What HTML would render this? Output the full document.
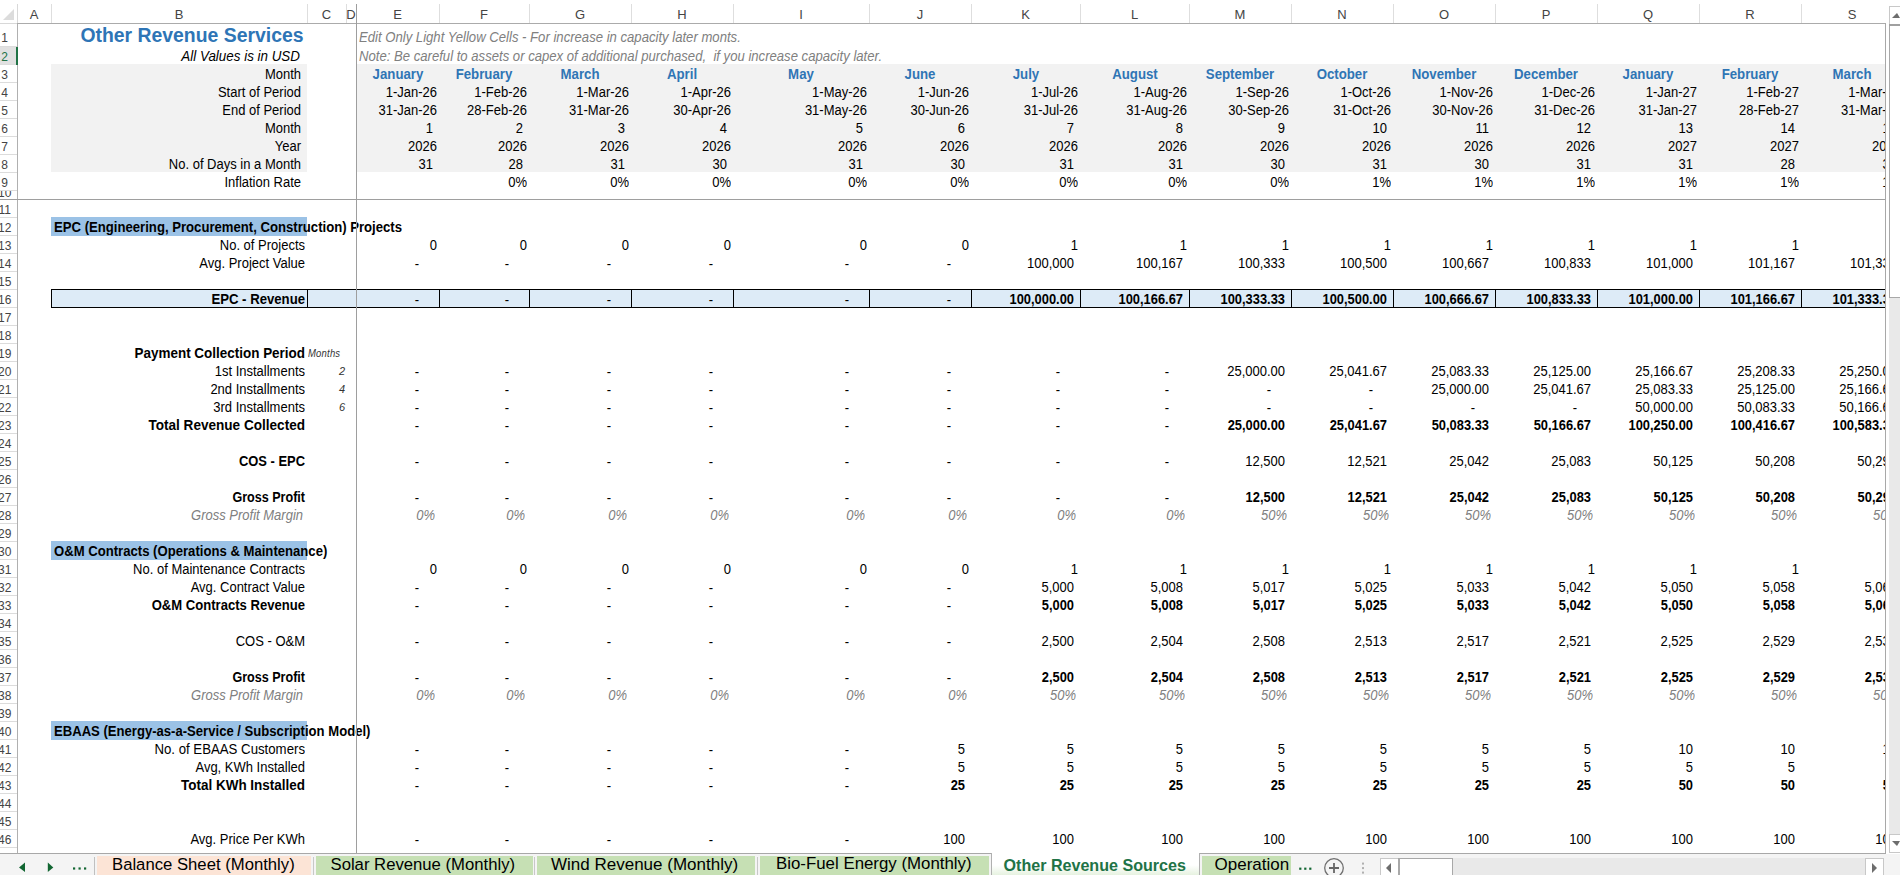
<!DOCTYPE html><html><head><meta charset="utf-8"><style>
html,body{margin:0;padding:0;width:1900px;height:875px;overflow:hidden;background:#fff;}
body{position:relative;font-family:"Liberation Sans",sans-serif;}
.t{position:absolute;white-space:pre;}
#rp{position:absolute;left:357px;top:0;width:1528px;height:853px;overflow:hidden;}
#lp{position:absolute;left:0;top:0;width:1900px;height:853px;}
</style></head><body>
<div id="rp">
<div style="position:absolute;left:-1px;top:64px;width:1547px;height:108px;background:#f2f2f2;"></div>
<div style="position:absolute;left:-1px;top:289px;width:1547px;height:19px;background:#ddebf7;"></div>
<div style="position:absolute;left:-1px;top:289px;width:1547px;height:1px;background:#000;"></div>
<div style="position:absolute;left:-1px;top:307px;width:1547px;height:1px;background:#000;"></div>
<div style="position:absolute;left:82px;top:289px;width:1px;height:19px;background:#000;"></div>
<div style="position:absolute;left:172px;top:289px;width:1px;height:19px;background:#000;"></div>
<div style="position:absolute;left:274px;top:289px;width:1px;height:19px;background:#000;"></div>
<div style="position:absolute;left:376px;top:289px;width:1px;height:19px;background:#000;"></div>
<div style="position:absolute;left:512px;top:289px;width:1px;height:19px;background:#000;"></div>
<div style="position:absolute;left:614px;top:289px;width:1px;height:19px;background:#000;"></div>
<div style="position:absolute;left:723px;top:289px;width:1px;height:19px;background:#000;"></div>
<div style="position:absolute;left:832px;top:289px;width:1px;height:19px;background:#000;"></div>
<div style="position:absolute;left:934px;top:289px;width:1px;height:19px;background:#000;"></div>
<div style="position:absolute;left:1036px;top:289px;width:1px;height:19px;background:#000;"></div>
<div style="position:absolute;left:1138px;top:289px;width:1px;height:19px;background:#000;"></div>
<div style="position:absolute;left:1240px;top:289px;width:1px;height:19px;background:#000;"></div>
<div style="position:absolute;left:1342px;top:289px;width:1px;height:19px;background:#000;"></div>
<div style="position:absolute;left:1444px;top:289px;width:1px;height:19px;background:#000;"></div>
<div style="position:absolute;left:1546px;top:289px;width:1px;height:19px;background:#000;"></div>
<div class="t" style="left:1.5px;top:30.25px;font:italic 14px/14px 'Liberation Sans', sans-serif;color:#808080;transform:scaleX(0.937);transform-origin:0 50%;">Edit Only Light Yellow Cells - For increase in capacity later monts.</div>
<div class="t" style="left:1.5px;top:49.25px;font:italic 14px/14px 'Liberation Sans', sans-serif;color:#808080;transform:scaleX(0.937);transform-origin:0 50%;">Note: Be careful to assets or capex of additional purchased,  if you increase capacity later.</div>
<div class="t" style="left:-559.5px;width:1200px;text-align:center;top:66.65px;font:bold 14px/14px 'Liberation Sans', sans-serif;color:#2f75b5;transform:scaleX(0.945);transform-origin:50% 50%;">January</div>
<div class="t" style="left:-1120.0px;width:1200px;text-align:right;top:84.65px;font:14px/14px 'Liberation Sans', sans-serif;color:#000;transform:scaleX(0.928);transform-origin:100% 50%;">1-Jan-26</div>
<div class="t" style="left:-1120.0px;width:1200px;text-align:right;top:102.65px;font:14px/14px 'Liberation Sans', sans-serif;color:#000;transform:scaleX(0.928);transform-origin:100% 50%;">31-Jan-26</div>
<div class="t" style="left:-1124.33px;width:1200px;text-align:right;top:120.65px;font:14px/14px 'Liberation Sans', sans-serif;color:#000;transform:scaleX(0.928);transform-origin:100% 50%;">1</div>
<div class="t" style="left:-1120.0px;width:1200px;text-align:right;top:138.65px;font:14px/14px 'Liberation Sans', sans-serif;color:#000;transform:scaleX(0.928);transform-origin:100% 50%;">2026</div>
<div class="t" style="left:-1124.33px;width:1200px;text-align:right;top:156.65px;font:14px/14px 'Liberation Sans', sans-serif;color:#000;transform:scaleX(0.928);transform-origin:100% 50%;">31</div>
<div class="t" style="left:-473.0px;width:1200px;text-align:center;top:66.65px;font:bold 14px/14px 'Liberation Sans', sans-serif;color:#2f75b5;transform:scaleX(0.945);transform-origin:50% 50%;">February</div>
<div class="t" style="left:-1030.0px;width:1200px;text-align:right;top:84.65px;font:14px/14px 'Liberation Sans', sans-serif;color:#000;transform:scaleX(0.928);transform-origin:100% 50%;">1-Feb-26</div>
<div class="t" style="left:-1030.0px;width:1200px;text-align:right;top:102.65px;font:14px/14px 'Liberation Sans', sans-serif;color:#000;transform:scaleX(0.928);transform-origin:100% 50%;">28-Feb-26</div>
<div class="t" style="left:-1034.33px;width:1200px;text-align:right;top:120.65px;font:14px/14px 'Liberation Sans', sans-serif;color:#000;transform:scaleX(0.928);transform-origin:100% 50%;">2</div>
<div class="t" style="left:-1030.0px;width:1200px;text-align:right;top:138.65px;font:14px/14px 'Liberation Sans', sans-serif;color:#000;transform:scaleX(0.928);transform-origin:100% 50%;">2026</div>
<div class="t" style="left:-1034.33px;width:1200px;text-align:right;top:156.65px;font:14px/14px 'Liberation Sans', sans-serif;color:#000;transform:scaleX(0.928);transform-origin:100% 50%;">28</div>
<div class="t" style="left:-1030.0px;width:1200px;text-align:right;top:174.65px;font:14px/14px 'Liberation Sans', sans-serif;color:#000;transform:scaleX(0.928);transform-origin:100% 50%;">0%</div>
<div class="t" style="left:-377.0px;width:1200px;text-align:center;top:66.65px;font:bold 14px/14px 'Liberation Sans', sans-serif;color:#2f75b5;transform:scaleX(0.945);transform-origin:50% 50%;">March</div>
<div class="t" style="left:-928.0px;width:1200px;text-align:right;top:84.65px;font:14px/14px 'Liberation Sans', sans-serif;color:#000;transform:scaleX(0.928);transform-origin:100% 50%;">1-Mar-26</div>
<div class="t" style="left:-928.0px;width:1200px;text-align:right;top:102.65px;font:14px/14px 'Liberation Sans', sans-serif;color:#000;transform:scaleX(0.928);transform-origin:100% 50%;">31-Mar-26</div>
<div class="t" style="left:-932.33px;width:1200px;text-align:right;top:120.65px;font:14px/14px 'Liberation Sans', sans-serif;color:#000;transform:scaleX(0.928);transform-origin:100% 50%;">3</div>
<div class="t" style="left:-928.0px;width:1200px;text-align:right;top:138.65px;font:14px/14px 'Liberation Sans', sans-serif;color:#000;transform:scaleX(0.928);transform-origin:100% 50%;">2026</div>
<div class="t" style="left:-932.33px;width:1200px;text-align:right;top:156.65px;font:14px/14px 'Liberation Sans', sans-serif;color:#000;transform:scaleX(0.928);transform-origin:100% 50%;">31</div>
<div class="t" style="left:-928.0px;width:1200px;text-align:right;top:174.65px;font:14px/14px 'Liberation Sans', sans-serif;color:#000;transform:scaleX(0.928);transform-origin:100% 50%;">0%</div>
<div class="t" style="left:-275.0px;width:1200px;text-align:center;top:66.65px;font:bold 14px/14px 'Liberation Sans', sans-serif;color:#2f75b5;transform:scaleX(0.945);transform-origin:50% 50%;">April</div>
<div class="t" style="left:-826.0px;width:1200px;text-align:right;top:84.65px;font:14px/14px 'Liberation Sans', sans-serif;color:#000;transform:scaleX(0.928);transform-origin:100% 50%;">1-Apr-26</div>
<div class="t" style="left:-826.0px;width:1200px;text-align:right;top:102.65px;font:14px/14px 'Liberation Sans', sans-serif;color:#000;transform:scaleX(0.928);transform-origin:100% 50%;">30-Apr-26</div>
<div class="t" style="left:-830.33px;width:1200px;text-align:right;top:120.65px;font:14px/14px 'Liberation Sans', sans-serif;color:#000;transform:scaleX(0.928);transform-origin:100% 50%;">4</div>
<div class="t" style="left:-826.0px;width:1200px;text-align:right;top:138.65px;font:14px/14px 'Liberation Sans', sans-serif;color:#000;transform:scaleX(0.928);transform-origin:100% 50%;">2026</div>
<div class="t" style="left:-830.33px;width:1200px;text-align:right;top:156.65px;font:14px/14px 'Liberation Sans', sans-serif;color:#000;transform:scaleX(0.928);transform-origin:100% 50%;">30</div>
<div class="t" style="left:-826.0px;width:1200px;text-align:right;top:174.65px;font:14px/14px 'Liberation Sans', sans-serif;color:#000;transform:scaleX(0.928);transform-origin:100% 50%;">0%</div>
<div class="t" style="left:-156.0px;width:1200px;text-align:center;top:66.65px;font:bold 14px/14px 'Liberation Sans', sans-serif;color:#2f75b5;transform:scaleX(0.945);transform-origin:50% 50%;">May</div>
<div class="t" style="left:-690.0px;width:1200px;text-align:right;top:84.65px;font:14px/14px 'Liberation Sans', sans-serif;color:#000;transform:scaleX(0.928);transform-origin:100% 50%;">1-May-26</div>
<div class="t" style="left:-690.0px;width:1200px;text-align:right;top:102.65px;font:14px/14px 'Liberation Sans', sans-serif;color:#000;transform:scaleX(0.928);transform-origin:100% 50%;">31-May-26</div>
<div class="t" style="left:-694.33px;width:1200px;text-align:right;top:120.65px;font:14px/14px 'Liberation Sans', sans-serif;color:#000;transform:scaleX(0.928);transform-origin:100% 50%;">5</div>
<div class="t" style="left:-690.0px;width:1200px;text-align:right;top:138.65px;font:14px/14px 'Liberation Sans', sans-serif;color:#000;transform:scaleX(0.928);transform-origin:100% 50%;">2026</div>
<div class="t" style="left:-694.33px;width:1200px;text-align:right;top:156.65px;font:14px/14px 'Liberation Sans', sans-serif;color:#000;transform:scaleX(0.928);transform-origin:100% 50%;">31</div>
<div class="t" style="left:-690.0px;width:1200px;text-align:right;top:174.65px;font:14px/14px 'Liberation Sans', sans-serif;color:#000;transform:scaleX(0.928);transform-origin:100% 50%;">0%</div>
<div class="t" style="left:-37.0px;width:1200px;text-align:center;top:66.65px;font:bold 14px/14px 'Liberation Sans', sans-serif;color:#2f75b5;transform:scaleX(0.945);transform-origin:50% 50%;">June</div>
<div class="t" style="left:-588.0px;width:1200px;text-align:right;top:84.65px;font:14px/14px 'Liberation Sans', sans-serif;color:#000;transform:scaleX(0.928);transform-origin:100% 50%;">1-Jun-26</div>
<div class="t" style="left:-588.0px;width:1200px;text-align:right;top:102.65px;font:14px/14px 'Liberation Sans', sans-serif;color:#000;transform:scaleX(0.928);transform-origin:100% 50%;">30-Jun-26</div>
<div class="t" style="left:-592.33px;width:1200px;text-align:right;top:120.65px;font:14px/14px 'Liberation Sans', sans-serif;color:#000;transform:scaleX(0.928);transform-origin:100% 50%;">6</div>
<div class="t" style="left:-588.0px;width:1200px;text-align:right;top:138.65px;font:14px/14px 'Liberation Sans', sans-serif;color:#000;transform:scaleX(0.928);transform-origin:100% 50%;">2026</div>
<div class="t" style="left:-592.33px;width:1200px;text-align:right;top:156.65px;font:14px/14px 'Liberation Sans', sans-serif;color:#000;transform:scaleX(0.928);transform-origin:100% 50%;">30</div>
<div class="t" style="left:-588.0px;width:1200px;text-align:right;top:174.65px;font:14px/14px 'Liberation Sans', sans-serif;color:#000;transform:scaleX(0.928);transform-origin:100% 50%;">0%</div>
<div class="t" style="left:68.5px;width:1200px;text-align:center;top:66.65px;font:bold 14px/14px 'Liberation Sans', sans-serif;color:#2f75b5;transform:scaleX(0.945);transform-origin:50% 50%;">July</div>
<div class="t" style="left:-479.0px;width:1200px;text-align:right;top:84.65px;font:14px/14px 'Liberation Sans', sans-serif;color:#000;transform:scaleX(0.928);transform-origin:100% 50%;">1-Jul-26</div>
<div class="t" style="left:-479.0px;width:1200px;text-align:right;top:102.65px;font:14px/14px 'Liberation Sans', sans-serif;color:#000;transform:scaleX(0.928);transform-origin:100% 50%;">31-Jul-26</div>
<div class="t" style="left:-483.3299999999999px;width:1200px;text-align:right;top:120.65px;font:14px/14px 'Liberation Sans', sans-serif;color:#000;transform:scaleX(0.928);transform-origin:100% 50%;">7</div>
<div class="t" style="left:-479.0px;width:1200px;text-align:right;top:138.65px;font:14px/14px 'Liberation Sans', sans-serif;color:#000;transform:scaleX(0.928);transform-origin:100% 50%;">2026</div>
<div class="t" style="left:-483.3299999999999px;width:1200px;text-align:right;top:156.65px;font:14px/14px 'Liberation Sans', sans-serif;color:#000;transform:scaleX(0.928);transform-origin:100% 50%;">31</div>
<div class="t" style="left:-479.0px;width:1200px;text-align:right;top:174.65px;font:14px/14px 'Liberation Sans', sans-serif;color:#000;transform:scaleX(0.928);transform-origin:100% 50%;">0%</div>
<div class="t" style="left:177.5px;width:1200px;text-align:center;top:66.65px;font:bold 14px/14px 'Liberation Sans', sans-serif;color:#2f75b5;transform:scaleX(0.945);transform-origin:50% 50%;">August</div>
<div class="t" style="left:-370.0px;width:1200px;text-align:right;top:84.65px;font:14px/14px 'Liberation Sans', sans-serif;color:#000;transform:scaleX(0.928);transform-origin:100% 50%;">1-Aug-26</div>
<div class="t" style="left:-370.0px;width:1200px;text-align:right;top:102.65px;font:14px/14px 'Liberation Sans', sans-serif;color:#000;transform:scaleX(0.928);transform-origin:100% 50%;">31-Aug-26</div>
<div class="t" style="left:-374.3299999999999px;width:1200px;text-align:right;top:120.65px;font:14px/14px 'Liberation Sans', sans-serif;color:#000;transform:scaleX(0.928);transform-origin:100% 50%;">8</div>
<div class="t" style="left:-370.0px;width:1200px;text-align:right;top:138.65px;font:14px/14px 'Liberation Sans', sans-serif;color:#000;transform:scaleX(0.928);transform-origin:100% 50%;">2026</div>
<div class="t" style="left:-374.3299999999999px;width:1200px;text-align:right;top:156.65px;font:14px/14px 'Liberation Sans', sans-serif;color:#000;transform:scaleX(0.928);transform-origin:100% 50%;">31</div>
<div class="t" style="left:-370.0px;width:1200px;text-align:right;top:174.65px;font:14px/14px 'Liberation Sans', sans-serif;color:#000;transform:scaleX(0.928);transform-origin:100% 50%;">0%</div>
<div class="t" style="left:283.0px;width:1200px;text-align:center;top:66.65px;font:bold 14px/14px 'Liberation Sans', sans-serif;color:#2f75b5;transform:scaleX(0.945);transform-origin:50% 50%;">September</div>
<div class="t" style="left:-268.0px;width:1200px;text-align:right;top:84.65px;font:14px/14px 'Liberation Sans', sans-serif;color:#000;transform:scaleX(0.928);transform-origin:100% 50%;">1-Sep-26</div>
<div class="t" style="left:-268.0px;width:1200px;text-align:right;top:102.65px;font:14px/14px 'Liberation Sans', sans-serif;color:#000;transform:scaleX(0.928);transform-origin:100% 50%;">30-Sep-26</div>
<div class="t" style="left:-272.3299999999999px;width:1200px;text-align:right;top:120.65px;font:14px/14px 'Liberation Sans', sans-serif;color:#000;transform:scaleX(0.928);transform-origin:100% 50%;">9</div>
<div class="t" style="left:-268.0px;width:1200px;text-align:right;top:138.65px;font:14px/14px 'Liberation Sans', sans-serif;color:#000;transform:scaleX(0.928);transform-origin:100% 50%;">2026</div>
<div class="t" style="left:-272.3299999999999px;width:1200px;text-align:right;top:156.65px;font:14px/14px 'Liberation Sans', sans-serif;color:#000;transform:scaleX(0.928);transform-origin:100% 50%;">30</div>
<div class="t" style="left:-268.0px;width:1200px;text-align:right;top:174.65px;font:14px/14px 'Liberation Sans', sans-serif;color:#000;transform:scaleX(0.928);transform-origin:100% 50%;">0%</div>
<div class="t" style="left:385.0px;width:1200px;text-align:center;top:66.65px;font:bold 14px/14px 'Liberation Sans', sans-serif;color:#2f75b5;transform:scaleX(0.945);transform-origin:50% 50%;">October</div>
<div class="t" style="left:-166.0px;width:1200px;text-align:right;top:84.65px;font:14px/14px 'Liberation Sans', sans-serif;color:#000;transform:scaleX(0.928);transform-origin:100% 50%;">1-Oct-26</div>
<div class="t" style="left:-166.0px;width:1200px;text-align:right;top:102.65px;font:14px/14px 'Liberation Sans', sans-serif;color:#000;transform:scaleX(0.928);transform-origin:100% 50%;">31-Oct-26</div>
<div class="t" style="left:-170.32999999999993px;width:1200px;text-align:right;top:120.65px;font:14px/14px 'Liberation Sans', sans-serif;color:#000;transform:scaleX(0.928);transform-origin:100% 50%;">10</div>
<div class="t" style="left:-166.0px;width:1200px;text-align:right;top:138.65px;font:14px/14px 'Liberation Sans', sans-serif;color:#000;transform:scaleX(0.928);transform-origin:100% 50%;">2026</div>
<div class="t" style="left:-170.32999999999993px;width:1200px;text-align:right;top:156.65px;font:14px/14px 'Liberation Sans', sans-serif;color:#000;transform:scaleX(0.928);transform-origin:100% 50%;">31</div>
<div class="t" style="left:-166.0px;width:1200px;text-align:right;top:174.65px;font:14px/14px 'Liberation Sans', sans-serif;color:#000;transform:scaleX(0.928);transform-origin:100% 50%;">1%</div>
<div class="t" style="left:487.0px;width:1200px;text-align:center;top:66.65px;font:bold 14px/14px 'Liberation Sans', sans-serif;color:#2f75b5;transform:scaleX(0.945);transform-origin:50% 50%;">November</div>
<div class="t" style="left:-64.0px;width:1200px;text-align:right;top:84.65px;font:14px/14px 'Liberation Sans', sans-serif;color:#000;transform:scaleX(0.928);transform-origin:100% 50%;">1-Nov-26</div>
<div class="t" style="left:-64.0px;width:1200px;text-align:right;top:102.65px;font:14px/14px 'Liberation Sans', sans-serif;color:#000;transform:scaleX(0.928);transform-origin:100% 50%;">30-Nov-26</div>
<div class="t" style="left:-68.32999999999993px;width:1200px;text-align:right;top:120.65px;font:14px/14px 'Liberation Sans', sans-serif;color:#000;transform:scaleX(0.928);transform-origin:100% 50%;">11</div>
<div class="t" style="left:-64.0px;width:1200px;text-align:right;top:138.65px;font:14px/14px 'Liberation Sans', sans-serif;color:#000;transform:scaleX(0.928);transform-origin:100% 50%;">2026</div>
<div class="t" style="left:-68.32999999999993px;width:1200px;text-align:right;top:156.65px;font:14px/14px 'Liberation Sans', sans-serif;color:#000;transform:scaleX(0.928);transform-origin:100% 50%;">30</div>
<div class="t" style="left:-64.0px;width:1200px;text-align:right;top:174.65px;font:14px/14px 'Liberation Sans', sans-serif;color:#000;transform:scaleX(0.928);transform-origin:100% 50%;">1%</div>
<div class="t" style="left:589.0px;width:1200px;text-align:center;top:66.65px;font:bold 14px/14px 'Liberation Sans', sans-serif;color:#2f75b5;transform:scaleX(0.945);transform-origin:50% 50%;">December</div>
<div class="t" style="left:38.0px;width:1200px;text-align:right;top:84.65px;font:14px/14px 'Liberation Sans', sans-serif;color:#000;transform:scaleX(0.928);transform-origin:100% 50%;">1-Dec-26</div>
<div class="t" style="left:38.0px;width:1200px;text-align:right;top:102.65px;font:14px/14px 'Liberation Sans', sans-serif;color:#000;transform:scaleX(0.928);transform-origin:100% 50%;">31-Dec-26</div>
<div class="t" style="left:33.67000000000007px;width:1200px;text-align:right;top:120.65px;font:14px/14px 'Liberation Sans', sans-serif;color:#000;transform:scaleX(0.928);transform-origin:100% 50%;">12</div>
<div class="t" style="left:38.0px;width:1200px;text-align:right;top:138.65px;font:14px/14px 'Liberation Sans', sans-serif;color:#000;transform:scaleX(0.928);transform-origin:100% 50%;">2026</div>
<div class="t" style="left:33.67000000000007px;width:1200px;text-align:right;top:156.65px;font:14px/14px 'Liberation Sans', sans-serif;color:#000;transform:scaleX(0.928);transform-origin:100% 50%;">31</div>
<div class="t" style="left:38.0px;width:1200px;text-align:right;top:174.65px;font:14px/14px 'Liberation Sans', sans-serif;color:#000;transform:scaleX(0.928);transform-origin:100% 50%;">1%</div>
<div class="t" style="left:691.0px;width:1200px;text-align:center;top:66.65px;font:bold 14px/14px 'Liberation Sans', sans-serif;color:#2f75b5;transform:scaleX(0.945);transform-origin:50% 50%;">January</div>
<div class="t" style="left:140.0px;width:1200px;text-align:right;top:84.65px;font:14px/14px 'Liberation Sans', sans-serif;color:#000;transform:scaleX(0.928);transform-origin:100% 50%;">1-Jan-27</div>
<div class="t" style="left:140.0px;width:1200px;text-align:right;top:102.65px;font:14px/14px 'Liberation Sans', sans-serif;color:#000;transform:scaleX(0.928);transform-origin:100% 50%;">31-Jan-27</div>
<div class="t" style="left:135.67000000000007px;width:1200px;text-align:right;top:120.65px;font:14px/14px 'Liberation Sans', sans-serif;color:#000;transform:scaleX(0.928);transform-origin:100% 50%;">13</div>
<div class="t" style="left:140.0px;width:1200px;text-align:right;top:138.65px;font:14px/14px 'Liberation Sans', sans-serif;color:#000;transform:scaleX(0.928);transform-origin:100% 50%;">2027</div>
<div class="t" style="left:135.67000000000007px;width:1200px;text-align:right;top:156.65px;font:14px/14px 'Liberation Sans', sans-serif;color:#000;transform:scaleX(0.928);transform-origin:100% 50%;">31</div>
<div class="t" style="left:140.0px;width:1200px;text-align:right;top:174.65px;font:14px/14px 'Liberation Sans', sans-serif;color:#000;transform:scaleX(0.928);transform-origin:100% 50%;">1%</div>
<div class="t" style="left:793.0px;width:1200px;text-align:center;top:66.65px;font:bold 14px/14px 'Liberation Sans', sans-serif;color:#2f75b5;transform:scaleX(0.945);transform-origin:50% 50%;">February</div>
<div class="t" style="left:242.0px;width:1200px;text-align:right;top:84.65px;font:14px/14px 'Liberation Sans', sans-serif;color:#000;transform:scaleX(0.928);transform-origin:100% 50%;">1-Feb-27</div>
<div class="t" style="left:242.0px;width:1200px;text-align:right;top:102.65px;font:14px/14px 'Liberation Sans', sans-serif;color:#000;transform:scaleX(0.928);transform-origin:100% 50%;">28-Feb-27</div>
<div class="t" style="left:237.67000000000007px;width:1200px;text-align:right;top:120.65px;font:14px/14px 'Liberation Sans', sans-serif;color:#000;transform:scaleX(0.928);transform-origin:100% 50%;">14</div>
<div class="t" style="left:242.0px;width:1200px;text-align:right;top:138.65px;font:14px/14px 'Liberation Sans', sans-serif;color:#000;transform:scaleX(0.928);transform-origin:100% 50%;">2027</div>
<div class="t" style="left:237.67000000000007px;width:1200px;text-align:right;top:156.65px;font:14px/14px 'Liberation Sans', sans-serif;color:#000;transform:scaleX(0.928);transform-origin:100% 50%;">28</div>
<div class="t" style="left:242.0px;width:1200px;text-align:right;top:174.65px;font:14px/14px 'Liberation Sans', sans-serif;color:#000;transform:scaleX(0.928);transform-origin:100% 50%;">1%</div>
<div class="t" style="left:895.0px;width:1200px;text-align:center;top:66.65px;font:bold 14px/14px 'Liberation Sans', sans-serif;color:#2f75b5;transform:scaleX(0.945);transform-origin:50% 50%;">March</div>
<div class="t" style="left:344.0px;width:1200px;text-align:right;top:84.65px;font:14px/14px 'Liberation Sans', sans-serif;color:#000;transform:scaleX(0.928);transform-origin:100% 50%;">1-Mar-27</div>
<div class="t" style="left:344.0px;width:1200px;text-align:right;top:102.65px;font:14px/14px 'Liberation Sans', sans-serif;color:#000;transform:scaleX(0.928);transform-origin:100% 50%;">31-Mar-27</div>
<div class="t" style="left:339.6700000000001px;width:1200px;text-align:right;top:120.65px;font:14px/14px 'Liberation Sans', sans-serif;color:#000;transform:scaleX(0.928);transform-origin:100% 50%;">15</div>
<div class="t" style="left:344.0px;width:1200px;text-align:right;top:138.65px;font:14px/14px 'Liberation Sans', sans-serif;color:#000;transform:scaleX(0.928);transform-origin:100% 50%;">2027</div>
<div class="t" style="left:339.6700000000001px;width:1200px;text-align:right;top:156.65px;font:14px/14px 'Liberation Sans', sans-serif;color:#000;transform:scaleX(0.928);transform-origin:100% 50%;">31</div>
<div class="t" style="left:344.0px;width:1200px;text-align:right;top:174.65px;font:14px/14px 'Liberation Sans', sans-serif;color:#000;transform:scaleX(0.928);transform-origin:100% 50%;">1%</div>
<div class="t" style="left:-1120.0px;width:1200px;text-align:right;top:237.65px;font:14px/14px 'Liberation Sans', sans-serif;color:#000;transform:scaleX(0.928);transform-origin:100% 50%;">0</div>
<div class="t" style="left:-1137.79px;width:1200px;text-align:right;top:256.65px;font:14px/14px 'Liberation Sans', sans-serif;color:#000;transform:scaleX(0.928);transform-origin:100% 50%;">-</div>
<div class="t" style="left:-1137.79px;width:1200px;text-align:right;top:292.65px;font:14px/14px 'Liberation Sans', sans-serif;color:#000;transform:scaleX(0.928);transform-origin:100% 50%;">-</div>
<div class="t" style="left:-1030.0px;width:1200px;text-align:right;top:237.65px;font:14px/14px 'Liberation Sans', sans-serif;color:#000;transform:scaleX(0.928);transform-origin:100% 50%;">0</div>
<div class="t" style="left:-1047.79px;width:1200px;text-align:right;top:256.65px;font:14px/14px 'Liberation Sans', sans-serif;color:#000;transform:scaleX(0.928);transform-origin:100% 50%;">-</div>
<div class="t" style="left:-1047.79px;width:1200px;text-align:right;top:292.65px;font:14px/14px 'Liberation Sans', sans-serif;color:#000;transform:scaleX(0.928);transform-origin:100% 50%;">-</div>
<div class="t" style="left:-928.0px;width:1200px;text-align:right;top:237.65px;font:14px/14px 'Liberation Sans', sans-serif;color:#000;transform:scaleX(0.928);transform-origin:100% 50%;">0</div>
<div class="t" style="left:-945.79px;width:1200px;text-align:right;top:256.65px;font:14px/14px 'Liberation Sans', sans-serif;color:#000;transform:scaleX(0.928);transform-origin:100% 50%;">-</div>
<div class="t" style="left:-945.79px;width:1200px;text-align:right;top:292.65px;font:14px/14px 'Liberation Sans', sans-serif;color:#000;transform:scaleX(0.928);transform-origin:100% 50%;">-</div>
<div class="t" style="left:-826.0px;width:1200px;text-align:right;top:237.65px;font:14px/14px 'Liberation Sans', sans-serif;color:#000;transform:scaleX(0.928);transform-origin:100% 50%;">0</div>
<div class="t" style="left:-843.79px;width:1200px;text-align:right;top:256.65px;font:14px/14px 'Liberation Sans', sans-serif;color:#000;transform:scaleX(0.928);transform-origin:100% 50%;">-</div>
<div class="t" style="left:-843.79px;width:1200px;text-align:right;top:292.65px;font:14px/14px 'Liberation Sans', sans-serif;color:#000;transform:scaleX(0.928);transform-origin:100% 50%;">-</div>
<div class="t" style="left:-690.0px;width:1200px;text-align:right;top:237.65px;font:14px/14px 'Liberation Sans', sans-serif;color:#000;transform:scaleX(0.928);transform-origin:100% 50%;">0</div>
<div class="t" style="left:-707.79px;width:1200px;text-align:right;top:256.65px;font:14px/14px 'Liberation Sans', sans-serif;color:#000;transform:scaleX(0.928);transform-origin:100% 50%;">-</div>
<div class="t" style="left:-707.79px;width:1200px;text-align:right;top:292.65px;font:14px/14px 'Liberation Sans', sans-serif;color:#000;transform:scaleX(0.928);transform-origin:100% 50%;">-</div>
<div class="t" style="left:-588.0px;width:1200px;text-align:right;top:237.65px;font:14px/14px 'Liberation Sans', sans-serif;color:#000;transform:scaleX(0.928);transform-origin:100% 50%;">0</div>
<div class="t" style="left:-605.79px;width:1200px;text-align:right;top:256.65px;font:14px/14px 'Liberation Sans', sans-serif;color:#000;transform:scaleX(0.928);transform-origin:100% 50%;">-</div>
<div class="t" style="left:-605.79px;width:1200px;text-align:right;top:292.65px;font:14px/14px 'Liberation Sans', sans-serif;color:#000;transform:scaleX(0.928);transform-origin:100% 50%;">-</div>
<div class="t" style="left:-479.0px;width:1200px;text-align:right;top:237.65px;font:14px/14px 'Liberation Sans', sans-serif;color:#000;transform:scaleX(0.928);transform-origin:100% 50%;">1</div>
<div class="t" style="left:-483.3299999999999px;width:1200px;text-align:right;top:255.65px;font:14px/14px 'Liberation Sans', sans-serif;color:#000;transform:scaleX(0.928);transform-origin:100% 50%;">100,000</div>
<div class="t" style="left:-483.3299999999999px;width:1200px;text-align:right;top:291.65px;font:bold 14px/14px 'Liberation Sans', sans-serif;color:#000;transform:scaleX(0.92);transform-origin:100% 50%;">100,000.00</div>
<div class="t" style="left:-370.0px;width:1200px;text-align:right;top:237.65px;font:14px/14px 'Liberation Sans', sans-serif;color:#000;transform:scaleX(0.928);transform-origin:100% 50%;">1</div>
<div class="t" style="left:-374.3299999999999px;width:1200px;text-align:right;top:255.65px;font:14px/14px 'Liberation Sans', sans-serif;color:#000;transform:scaleX(0.928);transform-origin:100% 50%;">100,167</div>
<div class="t" style="left:-374.3299999999999px;width:1200px;text-align:right;top:291.65px;font:bold 14px/14px 'Liberation Sans', sans-serif;color:#000;transform:scaleX(0.92);transform-origin:100% 50%;">100,166.67</div>
<div class="t" style="left:-268.0px;width:1200px;text-align:right;top:237.65px;font:14px/14px 'Liberation Sans', sans-serif;color:#000;transform:scaleX(0.928);transform-origin:100% 50%;">1</div>
<div class="t" style="left:-272.3299999999999px;width:1200px;text-align:right;top:255.65px;font:14px/14px 'Liberation Sans', sans-serif;color:#000;transform:scaleX(0.928);transform-origin:100% 50%;">100,333</div>
<div class="t" style="left:-272.3299999999999px;width:1200px;text-align:right;top:291.65px;font:bold 14px/14px 'Liberation Sans', sans-serif;color:#000;transform:scaleX(0.92);transform-origin:100% 50%;">100,333.33</div>
<div class="t" style="left:-166.0px;width:1200px;text-align:right;top:237.65px;font:14px/14px 'Liberation Sans', sans-serif;color:#000;transform:scaleX(0.928);transform-origin:100% 50%;">1</div>
<div class="t" style="left:-170.32999999999993px;width:1200px;text-align:right;top:255.65px;font:14px/14px 'Liberation Sans', sans-serif;color:#000;transform:scaleX(0.928);transform-origin:100% 50%;">100,500</div>
<div class="t" style="left:-170.32999999999993px;width:1200px;text-align:right;top:291.65px;font:bold 14px/14px 'Liberation Sans', sans-serif;color:#000;transform:scaleX(0.92);transform-origin:100% 50%;">100,500.00</div>
<div class="t" style="left:-64.0px;width:1200px;text-align:right;top:237.65px;font:14px/14px 'Liberation Sans', sans-serif;color:#000;transform:scaleX(0.928);transform-origin:100% 50%;">1</div>
<div class="t" style="left:-68.32999999999993px;width:1200px;text-align:right;top:255.65px;font:14px/14px 'Liberation Sans', sans-serif;color:#000;transform:scaleX(0.928);transform-origin:100% 50%;">100,667</div>
<div class="t" style="left:-68.32999999999993px;width:1200px;text-align:right;top:291.65px;font:bold 14px/14px 'Liberation Sans', sans-serif;color:#000;transform:scaleX(0.92);transform-origin:100% 50%;">100,666.67</div>
<div class="t" style="left:38.0px;width:1200px;text-align:right;top:237.65px;font:14px/14px 'Liberation Sans', sans-serif;color:#000;transform:scaleX(0.928);transform-origin:100% 50%;">1</div>
<div class="t" style="left:33.67000000000007px;width:1200px;text-align:right;top:255.65px;font:14px/14px 'Liberation Sans', sans-serif;color:#000;transform:scaleX(0.928);transform-origin:100% 50%;">100,833</div>
<div class="t" style="left:33.67000000000007px;width:1200px;text-align:right;top:291.65px;font:bold 14px/14px 'Liberation Sans', sans-serif;color:#000;transform:scaleX(0.92);transform-origin:100% 50%;">100,833.33</div>
<div class="t" style="left:140.0px;width:1200px;text-align:right;top:237.65px;font:14px/14px 'Liberation Sans', sans-serif;color:#000;transform:scaleX(0.928);transform-origin:100% 50%;">1</div>
<div class="t" style="left:135.67000000000007px;width:1200px;text-align:right;top:255.65px;font:14px/14px 'Liberation Sans', sans-serif;color:#000;transform:scaleX(0.928);transform-origin:100% 50%;">101,000</div>
<div class="t" style="left:135.67000000000007px;width:1200px;text-align:right;top:291.65px;font:bold 14px/14px 'Liberation Sans', sans-serif;color:#000;transform:scaleX(0.92);transform-origin:100% 50%;">101,000.00</div>
<div class="t" style="left:242.0px;width:1200px;text-align:right;top:237.65px;font:14px/14px 'Liberation Sans', sans-serif;color:#000;transform:scaleX(0.928);transform-origin:100% 50%;">1</div>
<div class="t" style="left:237.67000000000007px;width:1200px;text-align:right;top:255.65px;font:14px/14px 'Liberation Sans', sans-serif;color:#000;transform:scaleX(0.928);transform-origin:100% 50%;">101,167</div>
<div class="t" style="left:237.67000000000007px;width:1200px;text-align:right;top:291.65px;font:bold 14px/14px 'Liberation Sans', sans-serif;color:#000;transform:scaleX(0.92);transform-origin:100% 50%;">101,166.67</div>
<div class="t" style="left:344.0px;width:1200px;text-align:right;top:237.65px;font:14px/14px 'Liberation Sans', sans-serif;color:#000;transform:scaleX(0.928);transform-origin:100% 50%;">1</div>
<div class="t" style="left:339.6700000000001px;width:1200px;text-align:right;top:255.65px;font:14px/14px 'Liberation Sans', sans-serif;color:#000;transform:scaleX(0.928);transform-origin:100% 50%;">101,333</div>
<div class="t" style="left:339.6700000000001px;width:1200px;text-align:right;top:291.65px;font:bold 14px/14px 'Liberation Sans', sans-serif;color:#000;transform:scaleX(0.92);transform-origin:100% 50%;">101,333.33</div>
<div class="t" style="left:-1137.79px;width:1200px;text-align:right;top:364.65px;font:14px/14px 'Liberation Sans', sans-serif;color:#000;transform:scaleX(0.928);transform-origin:100% 50%;">-</div>
<div class="t" style="left:-1137.79px;width:1200px;text-align:right;top:382.65px;font:14px/14px 'Liberation Sans', sans-serif;color:#000;transform:scaleX(0.928);transform-origin:100% 50%;">-</div>
<div class="t" style="left:-1137.79px;width:1200px;text-align:right;top:400.65px;font:14px/14px 'Liberation Sans', sans-serif;color:#000;transform:scaleX(0.928);transform-origin:100% 50%;">-</div>
<div class="t" style="left:-1137.79px;width:1200px;text-align:right;top:418.65px;font:14px/14px 'Liberation Sans', sans-serif;color:#000;transform:scaleX(0.928);transform-origin:100% 50%;">-</div>
<div class="t" style="left:-1137.79px;width:1200px;text-align:right;top:454.65px;font:14px/14px 'Liberation Sans', sans-serif;color:#000;transform:scaleX(0.928);transform-origin:100% 50%;">-</div>
<div class="t" style="left:-1137.79px;width:1200px;text-align:right;top:490.65px;font:14px/14px 'Liberation Sans', sans-serif;color:#000;transform:scaleX(0.928);transform-origin:100% 50%;">-</div>
<div class="t" style="left:-1122.0px;width:1200px;text-align:right;top:507.65px;font:italic 14px/14px 'Liberation Sans', sans-serif;color:#808080;transform:scaleX(0.928);transform-origin:100% 50%;">0%</div>
<div class="t" style="left:-1047.79px;width:1200px;text-align:right;top:364.65px;font:14px/14px 'Liberation Sans', sans-serif;color:#000;transform:scaleX(0.928);transform-origin:100% 50%;">-</div>
<div class="t" style="left:-1047.79px;width:1200px;text-align:right;top:382.65px;font:14px/14px 'Liberation Sans', sans-serif;color:#000;transform:scaleX(0.928);transform-origin:100% 50%;">-</div>
<div class="t" style="left:-1047.79px;width:1200px;text-align:right;top:400.65px;font:14px/14px 'Liberation Sans', sans-serif;color:#000;transform:scaleX(0.928);transform-origin:100% 50%;">-</div>
<div class="t" style="left:-1047.79px;width:1200px;text-align:right;top:418.65px;font:14px/14px 'Liberation Sans', sans-serif;color:#000;transform:scaleX(0.928);transform-origin:100% 50%;">-</div>
<div class="t" style="left:-1047.79px;width:1200px;text-align:right;top:454.65px;font:14px/14px 'Liberation Sans', sans-serif;color:#000;transform:scaleX(0.928);transform-origin:100% 50%;">-</div>
<div class="t" style="left:-1047.79px;width:1200px;text-align:right;top:490.65px;font:14px/14px 'Liberation Sans', sans-serif;color:#000;transform:scaleX(0.928);transform-origin:100% 50%;">-</div>
<div class="t" style="left:-1032.0px;width:1200px;text-align:right;top:507.65px;font:italic 14px/14px 'Liberation Sans', sans-serif;color:#808080;transform:scaleX(0.928);transform-origin:100% 50%;">0%</div>
<div class="t" style="left:-945.79px;width:1200px;text-align:right;top:364.65px;font:14px/14px 'Liberation Sans', sans-serif;color:#000;transform:scaleX(0.928);transform-origin:100% 50%;">-</div>
<div class="t" style="left:-945.79px;width:1200px;text-align:right;top:382.65px;font:14px/14px 'Liberation Sans', sans-serif;color:#000;transform:scaleX(0.928);transform-origin:100% 50%;">-</div>
<div class="t" style="left:-945.79px;width:1200px;text-align:right;top:400.65px;font:14px/14px 'Liberation Sans', sans-serif;color:#000;transform:scaleX(0.928);transform-origin:100% 50%;">-</div>
<div class="t" style="left:-945.79px;width:1200px;text-align:right;top:418.65px;font:14px/14px 'Liberation Sans', sans-serif;color:#000;transform:scaleX(0.928);transform-origin:100% 50%;">-</div>
<div class="t" style="left:-945.79px;width:1200px;text-align:right;top:454.65px;font:14px/14px 'Liberation Sans', sans-serif;color:#000;transform:scaleX(0.928);transform-origin:100% 50%;">-</div>
<div class="t" style="left:-945.79px;width:1200px;text-align:right;top:490.65px;font:14px/14px 'Liberation Sans', sans-serif;color:#000;transform:scaleX(0.928);transform-origin:100% 50%;">-</div>
<div class="t" style="left:-930.0px;width:1200px;text-align:right;top:507.65px;font:italic 14px/14px 'Liberation Sans', sans-serif;color:#808080;transform:scaleX(0.928);transform-origin:100% 50%;">0%</div>
<div class="t" style="left:-843.79px;width:1200px;text-align:right;top:364.65px;font:14px/14px 'Liberation Sans', sans-serif;color:#000;transform:scaleX(0.928);transform-origin:100% 50%;">-</div>
<div class="t" style="left:-843.79px;width:1200px;text-align:right;top:382.65px;font:14px/14px 'Liberation Sans', sans-serif;color:#000;transform:scaleX(0.928);transform-origin:100% 50%;">-</div>
<div class="t" style="left:-843.79px;width:1200px;text-align:right;top:400.65px;font:14px/14px 'Liberation Sans', sans-serif;color:#000;transform:scaleX(0.928);transform-origin:100% 50%;">-</div>
<div class="t" style="left:-843.79px;width:1200px;text-align:right;top:418.65px;font:14px/14px 'Liberation Sans', sans-serif;color:#000;transform:scaleX(0.928);transform-origin:100% 50%;">-</div>
<div class="t" style="left:-843.79px;width:1200px;text-align:right;top:454.65px;font:14px/14px 'Liberation Sans', sans-serif;color:#000;transform:scaleX(0.928);transform-origin:100% 50%;">-</div>
<div class="t" style="left:-843.79px;width:1200px;text-align:right;top:490.65px;font:14px/14px 'Liberation Sans', sans-serif;color:#000;transform:scaleX(0.928);transform-origin:100% 50%;">-</div>
<div class="t" style="left:-828.0px;width:1200px;text-align:right;top:507.65px;font:italic 14px/14px 'Liberation Sans', sans-serif;color:#808080;transform:scaleX(0.928);transform-origin:100% 50%;">0%</div>
<div class="t" style="left:-707.79px;width:1200px;text-align:right;top:364.65px;font:14px/14px 'Liberation Sans', sans-serif;color:#000;transform:scaleX(0.928);transform-origin:100% 50%;">-</div>
<div class="t" style="left:-707.79px;width:1200px;text-align:right;top:382.65px;font:14px/14px 'Liberation Sans', sans-serif;color:#000;transform:scaleX(0.928);transform-origin:100% 50%;">-</div>
<div class="t" style="left:-707.79px;width:1200px;text-align:right;top:400.65px;font:14px/14px 'Liberation Sans', sans-serif;color:#000;transform:scaleX(0.928);transform-origin:100% 50%;">-</div>
<div class="t" style="left:-707.79px;width:1200px;text-align:right;top:418.65px;font:14px/14px 'Liberation Sans', sans-serif;color:#000;transform:scaleX(0.928);transform-origin:100% 50%;">-</div>
<div class="t" style="left:-707.79px;width:1200px;text-align:right;top:454.65px;font:14px/14px 'Liberation Sans', sans-serif;color:#000;transform:scaleX(0.928);transform-origin:100% 50%;">-</div>
<div class="t" style="left:-707.79px;width:1200px;text-align:right;top:490.65px;font:14px/14px 'Liberation Sans', sans-serif;color:#000;transform:scaleX(0.928);transform-origin:100% 50%;">-</div>
<div class="t" style="left:-692.0px;width:1200px;text-align:right;top:507.65px;font:italic 14px/14px 'Liberation Sans', sans-serif;color:#808080;transform:scaleX(0.928);transform-origin:100% 50%;">0%</div>
<div class="t" style="left:-605.79px;width:1200px;text-align:right;top:364.65px;font:14px/14px 'Liberation Sans', sans-serif;color:#000;transform:scaleX(0.928);transform-origin:100% 50%;">-</div>
<div class="t" style="left:-605.79px;width:1200px;text-align:right;top:382.65px;font:14px/14px 'Liberation Sans', sans-serif;color:#000;transform:scaleX(0.928);transform-origin:100% 50%;">-</div>
<div class="t" style="left:-605.79px;width:1200px;text-align:right;top:400.65px;font:14px/14px 'Liberation Sans', sans-serif;color:#000;transform:scaleX(0.928);transform-origin:100% 50%;">-</div>
<div class="t" style="left:-605.79px;width:1200px;text-align:right;top:418.65px;font:14px/14px 'Liberation Sans', sans-serif;color:#000;transform:scaleX(0.928);transform-origin:100% 50%;">-</div>
<div class="t" style="left:-605.79px;width:1200px;text-align:right;top:454.65px;font:14px/14px 'Liberation Sans', sans-serif;color:#000;transform:scaleX(0.928);transform-origin:100% 50%;">-</div>
<div class="t" style="left:-605.79px;width:1200px;text-align:right;top:490.65px;font:14px/14px 'Liberation Sans', sans-serif;color:#000;transform:scaleX(0.928);transform-origin:100% 50%;">-</div>
<div class="t" style="left:-590.0px;width:1200px;text-align:right;top:507.65px;font:italic 14px/14px 'Liberation Sans', sans-serif;color:#808080;transform:scaleX(0.928);transform-origin:100% 50%;">0%</div>
<div class="t" style="left:-496.78999999999996px;width:1200px;text-align:right;top:364.65px;font:14px/14px 'Liberation Sans', sans-serif;color:#000;transform:scaleX(0.928);transform-origin:100% 50%;">-</div>
<div class="t" style="left:-496.78999999999996px;width:1200px;text-align:right;top:382.65px;font:14px/14px 'Liberation Sans', sans-serif;color:#000;transform:scaleX(0.928);transform-origin:100% 50%;">-</div>
<div class="t" style="left:-496.78999999999996px;width:1200px;text-align:right;top:400.65px;font:14px/14px 'Liberation Sans', sans-serif;color:#000;transform:scaleX(0.928);transform-origin:100% 50%;">-</div>
<div class="t" style="left:-496.78999999999996px;width:1200px;text-align:right;top:418.65px;font:14px/14px 'Liberation Sans', sans-serif;color:#000;transform:scaleX(0.928);transform-origin:100% 50%;">-</div>
<div class="t" style="left:-496.78999999999996px;width:1200px;text-align:right;top:454.65px;font:14px/14px 'Liberation Sans', sans-serif;color:#000;transform:scaleX(0.928);transform-origin:100% 50%;">-</div>
<div class="t" style="left:-496.78999999999996px;width:1200px;text-align:right;top:490.65px;font:14px/14px 'Liberation Sans', sans-serif;color:#000;transform:scaleX(0.928);transform-origin:100% 50%;">-</div>
<div class="t" style="left:-481.0px;width:1200px;text-align:right;top:507.65px;font:italic 14px/14px 'Liberation Sans', sans-serif;color:#808080;transform:scaleX(0.928);transform-origin:100% 50%;">0%</div>
<div class="t" style="left:-387.78999999999996px;width:1200px;text-align:right;top:364.65px;font:14px/14px 'Liberation Sans', sans-serif;color:#000;transform:scaleX(0.928);transform-origin:100% 50%;">-</div>
<div class="t" style="left:-387.78999999999996px;width:1200px;text-align:right;top:382.65px;font:14px/14px 'Liberation Sans', sans-serif;color:#000;transform:scaleX(0.928);transform-origin:100% 50%;">-</div>
<div class="t" style="left:-387.78999999999996px;width:1200px;text-align:right;top:400.65px;font:14px/14px 'Liberation Sans', sans-serif;color:#000;transform:scaleX(0.928);transform-origin:100% 50%;">-</div>
<div class="t" style="left:-387.78999999999996px;width:1200px;text-align:right;top:418.65px;font:14px/14px 'Liberation Sans', sans-serif;color:#000;transform:scaleX(0.928);transform-origin:100% 50%;">-</div>
<div class="t" style="left:-387.78999999999996px;width:1200px;text-align:right;top:454.65px;font:14px/14px 'Liberation Sans', sans-serif;color:#000;transform:scaleX(0.928);transform-origin:100% 50%;">-</div>
<div class="t" style="left:-387.78999999999996px;width:1200px;text-align:right;top:490.65px;font:14px/14px 'Liberation Sans', sans-serif;color:#000;transform:scaleX(0.928);transform-origin:100% 50%;">-</div>
<div class="t" style="left:-372.0px;width:1200px;text-align:right;top:507.65px;font:italic 14px/14px 'Liberation Sans', sans-serif;color:#808080;transform:scaleX(0.928);transform-origin:100% 50%;">0%</div>
<div class="t" style="left:-272.3299999999999px;width:1200px;text-align:right;top:363.65px;font:14px/14px 'Liberation Sans', sans-serif;color:#000;transform:scaleX(0.928);transform-origin:100% 50%;">25,000.00</div>
<div class="t" style="left:-285.78999999999996px;width:1200px;text-align:right;top:382.65px;font:14px/14px 'Liberation Sans', sans-serif;color:#000;transform:scaleX(0.928);transform-origin:100% 50%;">-</div>
<div class="t" style="left:-285.78999999999996px;width:1200px;text-align:right;top:400.65px;font:14px/14px 'Liberation Sans', sans-serif;color:#000;transform:scaleX(0.928);transform-origin:100% 50%;">-</div>
<div class="t" style="left:-272.3299999999999px;width:1200px;text-align:right;top:417.65px;font:bold 14px/14px 'Liberation Sans', sans-serif;color:#000;transform:scaleX(0.92);transform-origin:100% 50%;">25,000.00</div>
<div class="t" style="left:-272.3299999999999px;width:1200px;text-align:right;top:453.65px;font:14px/14px 'Liberation Sans', sans-serif;color:#000;transform:scaleX(0.928);transform-origin:100% 50%;">12,500</div>
<div class="t" style="left:-272.3299999999999px;width:1200px;text-align:right;top:489.65px;font:bold 14px/14px 'Liberation Sans', sans-serif;color:#000;transform:scaleX(0.92);transform-origin:100% 50%;">12,500</div>
<div class="t" style="left:-270.0px;width:1200px;text-align:right;top:507.65px;font:italic 14px/14px 'Liberation Sans', sans-serif;color:#808080;transform:scaleX(0.928);transform-origin:100% 50%;">50%</div>
<div class="t" style="left:-170.32999999999993px;width:1200px;text-align:right;top:363.65px;font:14px/14px 'Liberation Sans', sans-serif;color:#000;transform:scaleX(0.928);transform-origin:100% 50%;">25,041.67</div>
<div class="t" style="left:-183.78999999999996px;width:1200px;text-align:right;top:382.65px;font:14px/14px 'Liberation Sans', sans-serif;color:#000;transform:scaleX(0.928);transform-origin:100% 50%;">-</div>
<div class="t" style="left:-183.78999999999996px;width:1200px;text-align:right;top:400.65px;font:14px/14px 'Liberation Sans', sans-serif;color:#000;transform:scaleX(0.928);transform-origin:100% 50%;">-</div>
<div class="t" style="left:-170.32999999999993px;width:1200px;text-align:right;top:417.65px;font:bold 14px/14px 'Liberation Sans', sans-serif;color:#000;transform:scaleX(0.92);transform-origin:100% 50%;">25,041.67</div>
<div class="t" style="left:-170.32999999999993px;width:1200px;text-align:right;top:453.65px;font:14px/14px 'Liberation Sans', sans-serif;color:#000;transform:scaleX(0.928);transform-origin:100% 50%;">12,521</div>
<div class="t" style="left:-170.32999999999993px;width:1200px;text-align:right;top:489.65px;font:bold 14px/14px 'Liberation Sans', sans-serif;color:#000;transform:scaleX(0.92);transform-origin:100% 50%;">12,521</div>
<div class="t" style="left:-168.0px;width:1200px;text-align:right;top:507.65px;font:italic 14px/14px 'Liberation Sans', sans-serif;color:#808080;transform:scaleX(0.928);transform-origin:100% 50%;">50%</div>
<div class="t" style="left:-68.32999999999993px;width:1200px;text-align:right;top:363.65px;font:14px/14px 'Liberation Sans', sans-serif;color:#000;transform:scaleX(0.928);transform-origin:100% 50%;">25,083.33</div>
<div class="t" style="left:-68.32999999999993px;width:1200px;text-align:right;top:381.65px;font:14px/14px 'Liberation Sans', sans-serif;color:#000;transform:scaleX(0.928);transform-origin:100% 50%;">25,000.00</div>
<div class="t" style="left:-81.78999999999996px;width:1200px;text-align:right;top:400.65px;font:14px/14px 'Liberation Sans', sans-serif;color:#000;transform:scaleX(0.928);transform-origin:100% 50%;">-</div>
<div class="t" style="left:-68.32999999999993px;width:1200px;text-align:right;top:417.65px;font:bold 14px/14px 'Liberation Sans', sans-serif;color:#000;transform:scaleX(0.92);transform-origin:100% 50%;">50,083.33</div>
<div class="t" style="left:-68.32999999999993px;width:1200px;text-align:right;top:453.65px;font:14px/14px 'Liberation Sans', sans-serif;color:#000;transform:scaleX(0.928);transform-origin:100% 50%;">25,042</div>
<div class="t" style="left:-68.32999999999993px;width:1200px;text-align:right;top:489.65px;font:bold 14px/14px 'Liberation Sans', sans-serif;color:#000;transform:scaleX(0.92);transform-origin:100% 50%;">25,042</div>
<div class="t" style="left:-66.0px;width:1200px;text-align:right;top:507.65px;font:italic 14px/14px 'Liberation Sans', sans-serif;color:#808080;transform:scaleX(0.928);transform-origin:100% 50%;">50%</div>
<div class="t" style="left:33.67000000000007px;width:1200px;text-align:right;top:363.65px;font:14px/14px 'Liberation Sans', sans-serif;color:#000;transform:scaleX(0.928);transform-origin:100% 50%;">25,125.00</div>
<div class="t" style="left:33.67000000000007px;width:1200px;text-align:right;top:381.65px;font:14px/14px 'Liberation Sans', sans-serif;color:#000;transform:scaleX(0.928);transform-origin:100% 50%;">25,041.67</div>
<div class="t" style="left:20.210000000000036px;width:1200px;text-align:right;top:400.65px;font:14px/14px 'Liberation Sans', sans-serif;color:#000;transform:scaleX(0.928);transform-origin:100% 50%;">-</div>
<div class="t" style="left:33.67000000000007px;width:1200px;text-align:right;top:417.65px;font:bold 14px/14px 'Liberation Sans', sans-serif;color:#000;transform:scaleX(0.92);transform-origin:100% 50%;">50,166.67</div>
<div class="t" style="left:33.67000000000007px;width:1200px;text-align:right;top:453.65px;font:14px/14px 'Liberation Sans', sans-serif;color:#000;transform:scaleX(0.928);transform-origin:100% 50%;">25,083</div>
<div class="t" style="left:33.67000000000007px;width:1200px;text-align:right;top:489.65px;font:bold 14px/14px 'Liberation Sans', sans-serif;color:#000;transform:scaleX(0.92);transform-origin:100% 50%;">25,083</div>
<div class="t" style="left:36.0px;width:1200px;text-align:right;top:507.65px;font:italic 14px/14px 'Liberation Sans', sans-serif;color:#808080;transform:scaleX(0.928);transform-origin:100% 50%;">50%</div>
<div class="t" style="left:135.67000000000007px;width:1200px;text-align:right;top:363.65px;font:14px/14px 'Liberation Sans', sans-serif;color:#000;transform:scaleX(0.928);transform-origin:100% 50%;">25,166.67</div>
<div class="t" style="left:135.67000000000007px;width:1200px;text-align:right;top:381.65px;font:14px/14px 'Liberation Sans', sans-serif;color:#000;transform:scaleX(0.928);transform-origin:100% 50%;">25,083.33</div>
<div class="t" style="left:135.67000000000007px;width:1200px;text-align:right;top:399.65px;font:14px/14px 'Liberation Sans', sans-serif;color:#000;transform:scaleX(0.928);transform-origin:100% 50%;">50,000.00</div>
<div class="t" style="left:135.67000000000007px;width:1200px;text-align:right;top:417.65px;font:bold 14px/14px 'Liberation Sans', sans-serif;color:#000;transform:scaleX(0.92);transform-origin:100% 50%;">100,250.00</div>
<div class="t" style="left:135.67000000000007px;width:1200px;text-align:right;top:453.65px;font:14px/14px 'Liberation Sans', sans-serif;color:#000;transform:scaleX(0.928);transform-origin:100% 50%;">50,125</div>
<div class="t" style="left:135.67000000000007px;width:1200px;text-align:right;top:489.65px;font:bold 14px/14px 'Liberation Sans', sans-serif;color:#000;transform:scaleX(0.92);transform-origin:100% 50%;">50,125</div>
<div class="t" style="left:138.0px;width:1200px;text-align:right;top:507.65px;font:italic 14px/14px 'Liberation Sans', sans-serif;color:#808080;transform:scaleX(0.928);transform-origin:100% 50%;">50%</div>
<div class="t" style="left:237.67000000000007px;width:1200px;text-align:right;top:363.65px;font:14px/14px 'Liberation Sans', sans-serif;color:#000;transform:scaleX(0.928);transform-origin:100% 50%;">25,208.33</div>
<div class="t" style="left:237.67000000000007px;width:1200px;text-align:right;top:381.65px;font:14px/14px 'Liberation Sans', sans-serif;color:#000;transform:scaleX(0.928);transform-origin:100% 50%;">25,125.00</div>
<div class="t" style="left:237.67000000000007px;width:1200px;text-align:right;top:399.65px;font:14px/14px 'Liberation Sans', sans-serif;color:#000;transform:scaleX(0.928);transform-origin:100% 50%;">50,083.33</div>
<div class="t" style="left:237.67000000000007px;width:1200px;text-align:right;top:417.65px;font:bold 14px/14px 'Liberation Sans', sans-serif;color:#000;transform:scaleX(0.92);transform-origin:100% 50%;">100,416.67</div>
<div class="t" style="left:237.67000000000007px;width:1200px;text-align:right;top:453.65px;font:14px/14px 'Liberation Sans', sans-serif;color:#000;transform:scaleX(0.928);transform-origin:100% 50%;">50,208</div>
<div class="t" style="left:237.67000000000007px;width:1200px;text-align:right;top:489.65px;font:bold 14px/14px 'Liberation Sans', sans-serif;color:#000;transform:scaleX(0.92);transform-origin:100% 50%;">50,208</div>
<div class="t" style="left:240.0px;width:1200px;text-align:right;top:507.65px;font:italic 14px/14px 'Liberation Sans', sans-serif;color:#808080;transform:scaleX(0.928);transform-origin:100% 50%;">50%</div>
<div class="t" style="left:339.6700000000001px;width:1200px;text-align:right;top:363.65px;font:14px/14px 'Liberation Sans', sans-serif;color:#000;transform:scaleX(0.928);transform-origin:100% 50%;">25,250.00</div>
<div class="t" style="left:339.6700000000001px;width:1200px;text-align:right;top:381.65px;font:14px/14px 'Liberation Sans', sans-serif;color:#000;transform:scaleX(0.928);transform-origin:100% 50%;">25,166.67</div>
<div class="t" style="left:339.6700000000001px;width:1200px;text-align:right;top:399.65px;font:14px/14px 'Liberation Sans', sans-serif;color:#000;transform:scaleX(0.928);transform-origin:100% 50%;">50,166.67</div>
<div class="t" style="left:339.6700000000001px;width:1200px;text-align:right;top:417.65px;font:bold 14px/14px 'Liberation Sans', sans-serif;color:#000;transform:scaleX(0.92);transform-origin:100% 50%;">100,583.33</div>
<div class="t" style="left:339.6700000000001px;width:1200px;text-align:right;top:453.65px;font:14px/14px 'Liberation Sans', sans-serif;color:#000;transform:scaleX(0.928);transform-origin:100% 50%;">50,292</div>
<div class="t" style="left:339.6700000000001px;width:1200px;text-align:right;top:489.65px;font:bold 14px/14px 'Liberation Sans', sans-serif;color:#000;transform:scaleX(0.92);transform-origin:100% 50%;">50,292</div>
<div class="t" style="left:342.0px;width:1200px;text-align:right;top:507.65px;font:italic 14px/14px 'Liberation Sans', sans-serif;color:#808080;transform:scaleX(0.928);transform-origin:100% 50%;">50%</div>
<div class="t" style="left:-1120.0px;width:1200px;text-align:right;top:561.65px;font:14px/14px 'Liberation Sans', sans-serif;color:#000;transform:scaleX(0.928);transform-origin:100% 50%;">0</div>
<div class="t" style="left:-1137.79px;width:1200px;text-align:right;top:580.65px;font:14px/14px 'Liberation Sans', sans-serif;color:#000;transform:scaleX(0.928);transform-origin:100% 50%;">-</div>
<div class="t" style="left:-1137.79px;width:1200px;text-align:right;top:598.65px;font:14px/14px 'Liberation Sans', sans-serif;color:#000;transform:scaleX(0.928);transform-origin:100% 50%;">-</div>
<div class="t" style="left:-1137.79px;width:1200px;text-align:right;top:634.65px;font:14px/14px 'Liberation Sans', sans-serif;color:#000;transform:scaleX(0.928);transform-origin:100% 50%;">-</div>
<div class="t" style="left:-1137.79px;width:1200px;text-align:right;top:670.65px;font:14px/14px 'Liberation Sans', sans-serif;color:#000;transform:scaleX(0.928);transform-origin:100% 50%;">-</div>
<div class="t" style="left:-1122.0px;width:1200px;text-align:right;top:687.65px;font:italic 14px/14px 'Liberation Sans', sans-serif;color:#808080;transform:scaleX(0.928);transform-origin:100% 50%;">0%</div>
<div class="t" style="left:-1030.0px;width:1200px;text-align:right;top:561.65px;font:14px/14px 'Liberation Sans', sans-serif;color:#000;transform:scaleX(0.928);transform-origin:100% 50%;">0</div>
<div class="t" style="left:-1047.79px;width:1200px;text-align:right;top:580.65px;font:14px/14px 'Liberation Sans', sans-serif;color:#000;transform:scaleX(0.928);transform-origin:100% 50%;">-</div>
<div class="t" style="left:-1047.79px;width:1200px;text-align:right;top:598.65px;font:14px/14px 'Liberation Sans', sans-serif;color:#000;transform:scaleX(0.928);transform-origin:100% 50%;">-</div>
<div class="t" style="left:-1047.79px;width:1200px;text-align:right;top:634.65px;font:14px/14px 'Liberation Sans', sans-serif;color:#000;transform:scaleX(0.928);transform-origin:100% 50%;">-</div>
<div class="t" style="left:-1047.79px;width:1200px;text-align:right;top:670.65px;font:14px/14px 'Liberation Sans', sans-serif;color:#000;transform:scaleX(0.928);transform-origin:100% 50%;">-</div>
<div class="t" style="left:-1032.0px;width:1200px;text-align:right;top:687.65px;font:italic 14px/14px 'Liberation Sans', sans-serif;color:#808080;transform:scaleX(0.928);transform-origin:100% 50%;">0%</div>
<div class="t" style="left:-928.0px;width:1200px;text-align:right;top:561.65px;font:14px/14px 'Liberation Sans', sans-serif;color:#000;transform:scaleX(0.928);transform-origin:100% 50%;">0</div>
<div class="t" style="left:-945.79px;width:1200px;text-align:right;top:580.65px;font:14px/14px 'Liberation Sans', sans-serif;color:#000;transform:scaleX(0.928);transform-origin:100% 50%;">-</div>
<div class="t" style="left:-945.79px;width:1200px;text-align:right;top:598.65px;font:14px/14px 'Liberation Sans', sans-serif;color:#000;transform:scaleX(0.928);transform-origin:100% 50%;">-</div>
<div class="t" style="left:-945.79px;width:1200px;text-align:right;top:634.65px;font:14px/14px 'Liberation Sans', sans-serif;color:#000;transform:scaleX(0.928);transform-origin:100% 50%;">-</div>
<div class="t" style="left:-945.79px;width:1200px;text-align:right;top:670.65px;font:14px/14px 'Liberation Sans', sans-serif;color:#000;transform:scaleX(0.928);transform-origin:100% 50%;">-</div>
<div class="t" style="left:-930.0px;width:1200px;text-align:right;top:687.65px;font:italic 14px/14px 'Liberation Sans', sans-serif;color:#808080;transform:scaleX(0.928);transform-origin:100% 50%;">0%</div>
<div class="t" style="left:-826.0px;width:1200px;text-align:right;top:561.65px;font:14px/14px 'Liberation Sans', sans-serif;color:#000;transform:scaleX(0.928);transform-origin:100% 50%;">0</div>
<div class="t" style="left:-843.79px;width:1200px;text-align:right;top:580.65px;font:14px/14px 'Liberation Sans', sans-serif;color:#000;transform:scaleX(0.928);transform-origin:100% 50%;">-</div>
<div class="t" style="left:-843.79px;width:1200px;text-align:right;top:598.65px;font:14px/14px 'Liberation Sans', sans-serif;color:#000;transform:scaleX(0.928);transform-origin:100% 50%;">-</div>
<div class="t" style="left:-843.79px;width:1200px;text-align:right;top:634.65px;font:14px/14px 'Liberation Sans', sans-serif;color:#000;transform:scaleX(0.928);transform-origin:100% 50%;">-</div>
<div class="t" style="left:-843.79px;width:1200px;text-align:right;top:670.65px;font:14px/14px 'Liberation Sans', sans-serif;color:#000;transform:scaleX(0.928);transform-origin:100% 50%;">-</div>
<div class="t" style="left:-828.0px;width:1200px;text-align:right;top:687.65px;font:italic 14px/14px 'Liberation Sans', sans-serif;color:#808080;transform:scaleX(0.928);transform-origin:100% 50%;">0%</div>
<div class="t" style="left:-690.0px;width:1200px;text-align:right;top:561.65px;font:14px/14px 'Liberation Sans', sans-serif;color:#000;transform:scaleX(0.928);transform-origin:100% 50%;">0</div>
<div class="t" style="left:-707.79px;width:1200px;text-align:right;top:580.65px;font:14px/14px 'Liberation Sans', sans-serif;color:#000;transform:scaleX(0.928);transform-origin:100% 50%;">-</div>
<div class="t" style="left:-707.79px;width:1200px;text-align:right;top:598.65px;font:14px/14px 'Liberation Sans', sans-serif;color:#000;transform:scaleX(0.928);transform-origin:100% 50%;">-</div>
<div class="t" style="left:-707.79px;width:1200px;text-align:right;top:634.65px;font:14px/14px 'Liberation Sans', sans-serif;color:#000;transform:scaleX(0.928);transform-origin:100% 50%;">-</div>
<div class="t" style="left:-707.79px;width:1200px;text-align:right;top:670.65px;font:14px/14px 'Liberation Sans', sans-serif;color:#000;transform:scaleX(0.928);transform-origin:100% 50%;">-</div>
<div class="t" style="left:-692.0px;width:1200px;text-align:right;top:687.65px;font:italic 14px/14px 'Liberation Sans', sans-serif;color:#808080;transform:scaleX(0.928);transform-origin:100% 50%;">0%</div>
<div class="t" style="left:-588.0px;width:1200px;text-align:right;top:561.65px;font:14px/14px 'Liberation Sans', sans-serif;color:#000;transform:scaleX(0.928);transform-origin:100% 50%;">0</div>
<div class="t" style="left:-605.79px;width:1200px;text-align:right;top:580.65px;font:14px/14px 'Liberation Sans', sans-serif;color:#000;transform:scaleX(0.928);transform-origin:100% 50%;">-</div>
<div class="t" style="left:-605.79px;width:1200px;text-align:right;top:598.65px;font:14px/14px 'Liberation Sans', sans-serif;color:#000;transform:scaleX(0.928);transform-origin:100% 50%;">-</div>
<div class="t" style="left:-605.79px;width:1200px;text-align:right;top:634.65px;font:14px/14px 'Liberation Sans', sans-serif;color:#000;transform:scaleX(0.928);transform-origin:100% 50%;">-</div>
<div class="t" style="left:-605.79px;width:1200px;text-align:right;top:670.65px;font:14px/14px 'Liberation Sans', sans-serif;color:#000;transform:scaleX(0.928);transform-origin:100% 50%;">-</div>
<div class="t" style="left:-590.0px;width:1200px;text-align:right;top:687.65px;font:italic 14px/14px 'Liberation Sans', sans-serif;color:#808080;transform:scaleX(0.928);transform-origin:100% 50%;">0%</div>
<div class="t" style="left:-479.0px;width:1200px;text-align:right;top:561.65px;font:14px/14px 'Liberation Sans', sans-serif;color:#000;transform:scaleX(0.928);transform-origin:100% 50%;">1</div>
<div class="t" style="left:-483.3299999999999px;width:1200px;text-align:right;top:579.65px;font:14px/14px 'Liberation Sans', sans-serif;color:#000;transform:scaleX(0.928);transform-origin:100% 50%;">5,000</div>
<div class="t" style="left:-483.3299999999999px;width:1200px;text-align:right;top:597.65px;font:bold 14px/14px 'Liberation Sans', sans-serif;color:#000;transform:scaleX(0.92);transform-origin:100% 50%;">5,000</div>
<div class="t" style="left:-483.3299999999999px;width:1200px;text-align:right;top:633.65px;font:14px/14px 'Liberation Sans', sans-serif;color:#000;transform:scaleX(0.928);transform-origin:100% 50%;">2,500</div>
<div class="t" style="left:-483.3299999999999px;width:1200px;text-align:right;top:669.65px;font:bold 14px/14px 'Liberation Sans', sans-serif;color:#000;transform:scaleX(0.92);transform-origin:100% 50%;">2,500</div>
<div class="t" style="left:-481.0px;width:1200px;text-align:right;top:687.65px;font:italic 14px/14px 'Liberation Sans', sans-serif;color:#808080;transform:scaleX(0.928);transform-origin:100% 50%;">50%</div>
<div class="t" style="left:-370.0px;width:1200px;text-align:right;top:561.65px;font:14px/14px 'Liberation Sans', sans-serif;color:#000;transform:scaleX(0.928);transform-origin:100% 50%;">1</div>
<div class="t" style="left:-374.3299999999999px;width:1200px;text-align:right;top:579.65px;font:14px/14px 'Liberation Sans', sans-serif;color:#000;transform:scaleX(0.928);transform-origin:100% 50%;">5,008</div>
<div class="t" style="left:-374.3299999999999px;width:1200px;text-align:right;top:597.65px;font:bold 14px/14px 'Liberation Sans', sans-serif;color:#000;transform:scaleX(0.92);transform-origin:100% 50%;">5,008</div>
<div class="t" style="left:-374.3299999999999px;width:1200px;text-align:right;top:633.65px;font:14px/14px 'Liberation Sans', sans-serif;color:#000;transform:scaleX(0.928);transform-origin:100% 50%;">2,504</div>
<div class="t" style="left:-374.3299999999999px;width:1200px;text-align:right;top:669.65px;font:bold 14px/14px 'Liberation Sans', sans-serif;color:#000;transform:scaleX(0.92);transform-origin:100% 50%;">2,504</div>
<div class="t" style="left:-372.0px;width:1200px;text-align:right;top:687.65px;font:italic 14px/14px 'Liberation Sans', sans-serif;color:#808080;transform:scaleX(0.928);transform-origin:100% 50%;">50%</div>
<div class="t" style="left:-268.0px;width:1200px;text-align:right;top:561.65px;font:14px/14px 'Liberation Sans', sans-serif;color:#000;transform:scaleX(0.928);transform-origin:100% 50%;">1</div>
<div class="t" style="left:-272.3299999999999px;width:1200px;text-align:right;top:579.65px;font:14px/14px 'Liberation Sans', sans-serif;color:#000;transform:scaleX(0.928);transform-origin:100% 50%;">5,017</div>
<div class="t" style="left:-272.3299999999999px;width:1200px;text-align:right;top:597.65px;font:bold 14px/14px 'Liberation Sans', sans-serif;color:#000;transform:scaleX(0.92);transform-origin:100% 50%;">5,017</div>
<div class="t" style="left:-272.3299999999999px;width:1200px;text-align:right;top:633.65px;font:14px/14px 'Liberation Sans', sans-serif;color:#000;transform:scaleX(0.928);transform-origin:100% 50%;">2,508</div>
<div class="t" style="left:-272.3299999999999px;width:1200px;text-align:right;top:669.65px;font:bold 14px/14px 'Liberation Sans', sans-serif;color:#000;transform:scaleX(0.92);transform-origin:100% 50%;">2,508</div>
<div class="t" style="left:-270.0px;width:1200px;text-align:right;top:687.65px;font:italic 14px/14px 'Liberation Sans', sans-serif;color:#808080;transform:scaleX(0.928);transform-origin:100% 50%;">50%</div>
<div class="t" style="left:-166.0px;width:1200px;text-align:right;top:561.65px;font:14px/14px 'Liberation Sans', sans-serif;color:#000;transform:scaleX(0.928);transform-origin:100% 50%;">1</div>
<div class="t" style="left:-170.32999999999993px;width:1200px;text-align:right;top:579.65px;font:14px/14px 'Liberation Sans', sans-serif;color:#000;transform:scaleX(0.928);transform-origin:100% 50%;">5,025</div>
<div class="t" style="left:-170.32999999999993px;width:1200px;text-align:right;top:597.65px;font:bold 14px/14px 'Liberation Sans', sans-serif;color:#000;transform:scaleX(0.92);transform-origin:100% 50%;">5,025</div>
<div class="t" style="left:-170.32999999999993px;width:1200px;text-align:right;top:633.65px;font:14px/14px 'Liberation Sans', sans-serif;color:#000;transform:scaleX(0.928);transform-origin:100% 50%;">2,513</div>
<div class="t" style="left:-170.32999999999993px;width:1200px;text-align:right;top:669.65px;font:bold 14px/14px 'Liberation Sans', sans-serif;color:#000;transform:scaleX(0.92);transform-origin:100% 50%;">2,513</div>
<div class="t" style="left:-168.0px;width:1200px;text-align:right;top:687.65px;font:italic 14px/14px 'Liberation Sans', sans-serif;color:#808080;transform:scaleX(0.928);transform-origin:100% 50%;">50%</div>
<div class="t" style="left:-64.0px;width:1200px;text-align:right;top:561.65px;font:14px/14px 'Liberation Sans', sans-serif;color:#000;transform:scaleX(0.928);transform-origin:100% 50%;">1</div>
<div class="t" style="left:-68.32999999999993px;width:1200px;text-align:right;top:579.65px;font:14px/14px 'Liberation Sans', sans-serif;color:#000;transform:scaleX(0.928);transform-origin:100% 50%;">5,033</div>
<div class="t" style="left:-68.32999999999993px;width:1200px;text-align:right;top:597.65px;font:bold 14px/14px 'Liberation Sans', sans-serif;color:#000;transform:scaleX(0.92);transform-origin:100% 50%;">5,033</div>
<div class="t" style="left:-68.32999999999993px;width:1200px;text-align:right;top:633.65px;font:14px/14px 'Liberation Sans', sans-serif;color:#000;transform:scaleX(0.928);transform-origin:100% 50%;">2,517</div>
<div class="t" style="left:-68.32999999999993px;width:1200px;text-align:right;top:669.65px;font:bold 14px/14px 'Liberation Sans', sans-serif;color:#000;transform:scaleX(0.92);transform-origin:100% 50%;">2,517</div>
<div class="t" style="left:-66.0px;width:1200px;text-align:right;top:687.65px;font:italic 14px/14px 'Liberation Sans', sans-serif;color:#808080;transform:scaleX(0.928);transform-origin:100% 50%;">50%</div>
<div class="t" style="left:38.0px;width:1200px;text-align:right;top:561.65px;font:14px/14px 'Liberation Sans', sans-serif;color:#000;transform:scaleX(0.928);transform-origin:100% 50%;">1</div>
<div class="t" style="left:33.67000000000007px;width:1200px;text-align:right;top:579.65px;font:14px/14px 'Liberation Sans', sans-serif;color:#000;transform:scaleX(0.928);transform-origin:100% 50%;">5,042</div>
<div class="t" style="left:33.67000000000007px;width:1200px;text-align:right;top:597.65px;font:bold 14px/14px 'Liberation Sans', sans-serif;color:#000;transform:scaleX(0.92);transform-origin:100% 50%;">5,042</div>
<div class="t" style="left:33.67000000000007px;width:1200px;text-align:right;top:633.65px;font:14px/14px 'Liberation Sans', sans-serif;color:#000;transform:scaleX(0.928);transform-origin:100% 50%;">2,521</div>
<div class="t" style="left:33.67000000000007px;width:1200px;text-align:right;top:669.65px;font:bold 14px/14px 'Liberation Sans', sans-serif;color:#000;transform:scaleX(0.92);transform-origin:100% 50%;">2,521</div>
<div class="t" style="left:36.0px;width:1200px;text-align:right;top:687.65px;font:italic 14px/14px 'Liberation Sans', sans-serif;color:#808080;transform:scaleX(0.928);transform-origin:100% 50%;">50%</div>
<div class="t" style="left:140.0px;width:1200px;text-align:right;top:561.65px;font:14px/14px 'Liberation Sans', sans-serif;color:#000;transform:scaleX(0.928);transform-origin:100% 50%;">1</div>
<div class="t" style="left:135.67000000000007px;width:1200px;text-align:right;top:579.65px;font:14px/14px 'Liberation Sans', sans-serif;color:#000;transform:scaleX(0.928);transform-origin:100% 50%;">5,050</div>
<div class="t" style="left:135.67000000000007px;width:1200px;text-align:right;top:597.65px;font:bold 14px/14px 'Liberation Sans', sans-serif;color:#000;transform:scaleX(0.92);transform-origin:100% 50%;">5,050</div>
<div class="t" style="left:135.67000000000007px;width:1200px;text-align:right;top:633.65px;font:14px/14px 'Liberation Sans', sans-serif;color:#000;transform:scaleX(0.928);transform-origin:100% 50%;">2,525</div>
<div class="t" style="left:135.67000000000007px;width:1200px;text-align:right;top:669.65px;font:bold 14px/14px 'Liberation Sans', sans-serif;color:#000;transform:scaleX(0.92);transform-origin:100% 50%;">2,525</div>
<div class="t" style="left:138.0px;width:1200px;text-align:right;top:687.65px;font:italic 14px/14px 'Liberation Sans', sans-serif;color:#808080;transform:scaleX(0.928);transform-origin:100% 50%;">50%</div>
<div class="t" style="left:242.0px;width:1200px;text-align:right;top:561.65px;font:14px/14px 'Liberation Sans', sans-serif;color:#000;transform:scaleX(0.928);transform-origin:100% 50%;">1</div>
<div class="t" style="left:237.67000000000007px;width:1200px;text-align:right;top:579.65px;font:14px/14px 'Liberation Sans', sans-serif;color:#000;transform:scaleX(0.928);transform-origin:100% 50%;">5,058</div>
<div class="t" style="left:237.67000000000007px;width:1200px;text-align:right;top:597.65px;font:bold 14px/14px 'Liberation Sans', sans-serif;color:#000;transform:scaleX(0.92);transform-origin:100% 50%;">5,058</div>
<div class="t" style="left:237.67000000000007px;width:1200px;text-align:right;top:633.65px;font:14px/14px 'Liberation Sans', sans-serif;color:#000;transform:scaleX(0.928);transform-origin:100% 50%;">2,529</div>
<div class="t" style="left:237.67000000000007px;width:1200px;text-align:right;top:669.65px;font:bold 14px/14px 'Liberation Sans', sans-serif;color:#000;transform:scaleX(0.92);transform-origin:100% 50%;">2,529</div>
<div class="t" style="left:240.0px;width:1200px;text-align:right;top:687.65px;font:italic 14px/14px 'Liberation Sans', sans-serif;color:#808080;transform:scaleX(0.928);transform-origin:100% 50%;">50%</div>
<div class="t" style="left:344.0px;width:1200px;text-align:right;top:561.65px;font:14px/14px 'Liberation Sans', sans-serif;color:#000;transform:scaleX(0.928);transform-origin:100% 50%;">1</div>
<div class="t" style="left:339.6700000000001px;width:1200px;text-align:right;top:579.65px;font:14px/14px 'Liberation Sans', sans-serif;color:#000;transform:scaleX(0.928);transform-origin:100% 50%;">5,067</div>
<div class="t" style="left:339.6700000000001px;width:1200px;text-align:right;top:597.65px;font:bold 14px/14px 'Liberation Sans', sans-serif;color:#000;transform:scaleX(0.92);transform-origin:100% 50%;">5,067</div>
<div class="t" style="left:339.6700000000001px;width:1200px;text-align:right;top:633.65px;font:14px/14px 'Liberation Sans', sans-serif;color:#000;transform:scaleX(0.928);transform-origin:100% 50%;">2,533</div>
<div class="t" style="left:339.6700000000001px;width:1200px;text-align:right;top:669.65px;font:bold 14px/14px 'Liberation Sans', sans-serif;color:#000;transform:scaleX(0.92);transform-origin:100% 50%;">2,533</div>
<div class="t" style="left:342.0px;width:1200px;text-align:right;top:687.65px;font:italic 14px/14px 'Liberation Sans', sans-serif;color:#808080;transform:scaleX(0.928);transform-origin:100% 50%;">50%</div>
<div class="t" style="left:-1137.79px;width:1200px;text-align:right;top:742.65px;font:14px/14px 'Liberation Sans', sans-serif;color:#000;transform:scaleX(0.928);transform-origin:100% 50%;">-</div>
<div class="t" style="left:-1137.79px;width:1200px;text-align:right;top:760.65px;font:14px/14px 'Liberation Sans', sans-serif;color:#000;transform:scaleX(0.928);transform-origin:100% 50%;">-</div>
<div class="t" style="left:-1137.79px;width:1200px;text-align:right;top:832.65px;font:14px/14px 'Liberation Sans', sans-serif;color:#000;transform:scaleX(0.928);transform-origin:100% 50%;">-</div>
<div class="t" style="left:-1137.79px;width:1200px;text-align:right;top:778.65px;font:14px/14px 'Liberation Sans', sans-serif;color:#000;transform:scaleX(0.928);transform-origin:100% 50%;">-</div>
<div class="t" style="left:-1047.79px;width:1200px;text-align:right;top:742.65px;font:14px/14px 'Liberation Sans', sans-serif;color:#000;transform:scaleX(0.928);transform-origin:100% 50%;">-</div>
<div class="t" style="left:-1047.79px;width:1200px;text-align:right;top:760.65px;font:14px/14px 'Liberation Sans', sans-serif;color:#000;transform:scaleX(0.928);transform-origin:100% 50%;">-</div>
<div class="t" style="left:-1047.79px;width:1200px;text-align:right;top:832.65px;font:14px/14px 'Liberation Sans', sans-serif;color:#000;transform:scaleX(0.928);transform-origin:100% 50%;">-</div>
<div class="t" style="left:-1047.79px;width:1200px;text-align:right;top:778.65px;font:14px/14px 'Liberation Sans', sans-serif;color:#000;transform:scaleX(0.928);transform-origin:100% 50%;">-</div>
<div class="t" style="left:-945.79px;width:1200px;text-align:right;top:742.65px;font:14px/14px 'Liberation Sans', sans-serif;color:#000;transform:scaleX(0.928);transform-origin:100% 50%;">-</div>
<div class="t" style="left:-945.79px;width:1200px;text-align:right;top:760.65px;font:14px/14px 'Liberation Sans', sans-serif;color:#000;transform:scaleX(0.928);transform-origin:100% 50%;">-</div>
<div class="t" style="left:-945.79px;width:1200px;text-align:right;top:832.65px;font:14px/14px 'Liberation Sans', sans-serif;color:#000;transform:scaleX(0.928);transform-origin:100% 50%;">-</div>
<div class="t" style="left:-945.79px;width:1200px;text-align:right;top:778.65px;font:14px/14px 'Liberation Sans', sans-serif;color:#000;transform:scaleX(0.928);transform-origin:100% 50%;">-</div>
<div class="t" style="left:-843.79px;width:1200px;text-align:right;top:742.65px;font:14px/14px 'Liberation Sans', sans-serif;color:#000;transform:scaleX(0.928);transform-origin:100% 50%;">-</div>
<div class="t" style="left:-843.79px;width:1200px;text-align:right;top:760.65px;font:14px/14px 'Liberation Sans', sans-serif;color:#000;transform:scaleX(0.928);transform-origin:100% 50%;">-</div>
<div class="t" style="left:-843.79px;width:1200px;text-align:right;top:832.65px;font:14px/14px 'Liberation Sans', sans-serif;color:#000;transform:scaleX(0.928);transform-origin:100% 50%;">-</div>
<div class="t" style="left:-843.79px;width:1200px;text-align:right;top:778.65px;font:14px/14px 'Liberation Sans', sans-serif;color:#000;transform:scaleX(0.928);transform-origin:100% 50%;">-</div>
<div class="t" style="left:-707.79px;width:1200px;text-align:right;top:742.65px;font:14px/14px 'Liberation Sans', sans-serif;color:#000;transform:scaleX(0.928);transform-origin:100% 50%;">-</div>
<div class="t" style="left:-707.79px;width:1200px;text-align:right;top:760.65px;font:14px/14px 'Liberation Sans', sans-serif;color:#000;transform:scaleX(0.928);transform-origin:100% 50%;">-</div>
<div class="t" style="left:-707.79px;width:1200px;text-align:right;top:832.65px;font:14px/14px 'Liberation Sans', sans-serif;color:#000;transform:scaleX(0.928);transform-origin:100% 50%;">-</div>
<div class="t" style="left:-707.79px;width:1200px;text-align:right;top:778.65px;font:14px/14px 'Liberation Sans', sans-serif;color:#000;transform:scaleX(0.928);transform-origin:100% 50%;">-</div>
<div class="t" style="left:-592.33px;width:1200px;text-align:right;top:741.65px;font:14px/14px 'Liberation Sans', sans-serif;color:#000;transform:scaleX(0.928);transform-origin:100% 50%;">5</div>
<div class="t" style="left:-592.33px;width:1200px;text-align:right;top:759.65px;font:14px/14px 'Liberation Sans', sans-serif;color:#000;transform:scaleX(0.928);transform-origin:100% 50%;">5</div>
<div class="t" style="left:-592.33px;width:1200px;text-align:right;top:777.65px;font:bold 14px/14px 'Liberation Sans', sans-serif;color:#000;transform:scaleX(0.92);transform-origin:100% 50%;">25</div>
<div class="t" style="left:-592.33px;width:1200px;text-align:right;top:831.65px;font:14px/14px 'Liberation Sans', sans-serif;color:#000;transform:scaleX(0.928);transform-origin:100% 50%;">100</div>
<div class="t" style="left:-483.3299999999999px;width:1200px;text-align:right;top:741.65px;font:14px/14px 'Liberation Sans', sans-serif;color:#000;transform:scaleX(0.928);transform-origin:100% 50%;">5</div>
<div class="t" style="left:-483.3299999999999px;width:1200px;text-align:right;top:759.65px;font:14px/14px 'Liberation Sans', sans-serif;color:#000;transform:scaleX(0.928);transform-origin:100% 50%;">5</div>
<div class="t" style="left:-483.3299999999999px;width:1200px;text-align:right;top:777.65px;font:bold 14px/14px 'Liberation Sans', sans-serif;color:#000;transform:scaleX(0.92);transform-origin:100% 50%;">25</div>
<div class="t" style="left:-483.3299999999999px;width:1200px;text-align:right;top:831.65px;font:14px/14px 'Liberation Sans', sans-serif;color:#000;transform:scaleX(0.928);transform-origin:100% 50%;">100</div>
<div class="t" style="left:-374.3299999999999px;width:1200px;text-align:right;top:741.65px;font:14px/14px 'Liberation Sans', sans-serif;color:#000;transform:scaleX(0.928);transform-origin:100% 50%;">5</div>
<div class="t" style="left:-374.3299999999999px;width:1200px;text-align:right;top:759.65px;font:14px/14px 'Liberation Sans', sans-serif;color:#000;transform:scaleX(0.928);transform-origin:100% 50%;">5</div>
<div class="t" style="left:-374.3299999999999px;width:1200px;text-align:right;top:777.65px;font:bold 14px/14px 'Liberation Sans', sans-serif;color:#000;transform:scaleX(0.92);transform-origin:100% 50%;">25</div>
<div class="t" style="left:-374.3299999999999px;width:1200px;text-align:right;top:831.65px;font:14px/14px 'Liberation Sans', sans-serif;color:#000;transform:scaleX(0.928);transform-origin:100% 50%;">100</div>
<div class="t" style="left:-272.3299999999999px;width:1200px;text-align:right;top:741.65px;font:14px/14px 'Liberation Sans', sans-serif;color:#000;transform:scaleX(0.928);transform-origin:100% 50%;">5</div>
<div class="t" style="left:-272.3299999999999px;width:1200px;text-align:right;top:759.65px;font:14px/14px 'Liberation Sans', sans-serif;color:#000;transform:scaleX(0.928);transform-origin:100% 50%;">5</div>
<div class="t" style="left:-272.3299999999999px;width:1200px;text-align:right;top:777.65px;font:bold 14px/14px 'Liberation Sans', sans-serif;color:#000;transform:scaleX(0.92);transform-origin:100% 50%;">25</div>
<div class="t" style="left:-272.3299999999999px;width:1200px;text-align:right;top:831.65px;font:14px/14px 'Liberation Sans', sans-serif;color:#000;transform:scaleX(0.928);transform-origin:100% 50%;">100</div>
<div class="t" style="left:-170.32999999999993px;width:1200px;text-align:right;top:741.65px;font:14px/14px 'Liberation Sans', sans-serif;color:#000;transform:scaleX(0.928);transform-origin:100% 50%;">5</div>
<div class="t" style="left:-170.32999999999993px;width:1200px;text-align:right;top:759.65px;font:14px/14px 'Liberation Sans', sans-serif;color:#000;transform:scaleX(0.928);transform-origin:100% 50%;">5</div>
<div class="t" style="left:-170.32999999999993px;width:1200px;text-align:right;top:777.65px;font:bold 14px/14px 'Liberation Sans', sans-serif;color:#000;transform:scaleX(0.92);transform-origin:100% 50%;">25</div>
<div class="t" style="left:-170.32999999999993px;width:1200px;text-align:right;top:831.65px;font:14px/14px 'Liberation Sans', sans-serif;color:#000;transform:scaleX(0.928);transform-origin:100% 50%;">100</div>
<div class="t" style="left:-68.32999999999993px;width:1200px;text-align:right;top:741.65px;font:14px/14px 'Liberation Sans', sans-serif;color:#000;transform:scaleX(0.928);transform-origin:100% 50%;">5</div>
<div class="t" style="left:-68.32999999999993px;width:1200px;text-align:right;top:759.65px;font:14px/14px 'Liberation Sans', sans-serif;color:#000;transform:scaleX(0.928);transform-origin:100% 50%;">5</div>
<div class="t" style="left:-68.32999999999993px;width:1200px;text-align:right;top:777.65px;font:bold 14px/14px 'Liberation Sans', sans-serif;color:#000;transform:scaleX(0.92);transform-origin:100% 50%;">25</div>
<div class="t" style="left:-68.32999999999993px;width:1200px;text-align:right;top:831.65px;font:14px/14px 'Liberation Sans', sans-serif;color:#000;transform:scaleX(0.928);transform-origin:100% 50%;">100</div>
<div class="t" style="left:33.67000000000007px;width:1200px;text-align:right;top:741.65px;font:14px/14px 'Liberation Sans', sans-serif;color:#000;transform:scaleX(0.928);transform-origin:100% 50%;">5</div>
<div class="t" style="left:33.67000000000007px;width:1200px;text-align:right;top:759.65px;font:14px/14px 'Liberation Sans', sans-serif;color:#000;transform:scaleX(0.928);transform-origin:100% 50%;">5</div>
<div class="t" style="left:33.67000000000007px;width:1200px;text-align:right;top:777.65px;font:bold 14px/14px 'Liberation Sans', sans-serif;color:#000;transform:scaleX(0.92);transform-origin:100% 50%;">25</div>
<div class="t" style="left:33.67000000000007px;width:1200px;text-align:right;top:831.65px;font:14px/14px 'Liberation Sans', sans-serif;color:#000;transform:scaleX(0.928);transform-origin:100% 50%;">100</div>
<div class="t" style="left:135.67000000000007px;width:1200px;text-align:right;top:741.65px;font:14px/14px 'Liberation Sans', sans-serif;color:#000;transform:scaleX(0.928);transform-origin:100% 50%;">10</div>
<div class="t" style="left:135.67000000000007px;width:1200px;text-align:right;top:759.65px;font:14px/14px 'Liberation Sans', sans-serif;color:#000;transform:scaleX(0.928);transform-origin:100% 50%;">5</div>
<div class="t" style="left:135.67000000000007px;width:1200px;text-align:right;top:777.65px;font:bold 14px/14px 'Liberation Sans', sans-serif;color:#000;transform:scaleX(0.92);transform-origin:100% 50%;">50</div>
<div class="t" style="left:135.67000000000007px;width:1200px;text-align:right;top:831.65px;font:14px/14px 'Liberation Sans', sans-serif;color:#000;transform:scaleX(0.928);transform-origin:100% 50%;">100</div>
<div class="t" style="left:237.67000000000007px;width:1200px;text-align:right;top:741.65px;font:14px/14px 'Liberation Sans', sans-serif;color:#000;transform:scaleX(0.928);transform-origin:100% 50%;">10</div>
<div class="t" style="left:237.67000000000007px;width:1200px;text-align:right;top:759.65px;font:14px/14px 'Liberation Sans', sans-serif;color:#000;transform:scaleX(0.928);transform-origin:100% 50%;">5</div>
<div class="t" style="left:237.67000000000007px;width:1200px;text-align:right;top:777.65px;font:bold 14px/14px 'Liberation Sans', sans-serif;color:#000;transform:scaleX(0.92);transform-origin:100% 50%;">50</div>
<div class="t" style="left:237.67000000000007px;width:1200px;text-align:right;top:831.65px;font:14px/14px 'Liberation Sans', sans-serif;color:#000;transform:scaleX(0.928);transform-origin:100% 50%;">100</div>
<div class="t" style="left:339.6700000000001px;width:1200px;text-align:right;top:741.65px;font:14px/14px 'Liberation Sans', sans-serif;color:#000;transform:scaleX(0.928);transform-origin:100% 50%;">10</div>
<div class="t" style="left:339.6700000000001px;width:1200px;text-align:right;top:759.65px;font:14px/14px 'Liberation Sans', sans-serif;color:#000;transform:scaleX(0.928);transform-origin:100% 50%;">5</div>
<div class="t" style="left:339.6700000000001px;width:1200px;text-align:right;top:777.65px;font:bold 14px/14px 'Liberation Sans', sans-serif;color:#000;transform:scaleX(0.92);transform-origin:100% 50%;">50</div>
<div class="t" style="left:339.6700000000001px;width:1200px;text-align:right;top:831.65px;font:14px/14px 'Liberation Sans', sans-serif;color:#000;transform:scaleX(0.928);transform-origin:100% 50%;">100</div>
</div>
<div style="position:absolute;left:51px;top:64px;width:256px;height:108px;background:#f2f2f2;"></div>
<div style="position:absolute;left:51px;top:217px;width:256px;height:19px;background:#9bc2e6;"></div>
<div style="position:absolute;left:51px;top:541px;width:256px;height:19px;background:#9bc2e6;"></div>
<div style="position:absolute;left:51px;top:721px;width:256px;height:19px;background:#9bc2e6;"></div>
<div style="position:absolute;left:51px;top:289px;width:305px;height:19px;background:#ddebf7;"></div>
<div style="position:absolute;left:51px;top:289px;width:305px;height:1px;background:#000;"></div>
<div style="position:absolute;left:51px;top:307px;width:305px;height:1px;background:#000;"></div>
<div style="position:absolute;left:51px;top:289px;width:1px;height:19px;background:#000;"></div>
<div style="position:absolute;left:307px;top:289px;width:1px;height:19px;background:#000;"></div>
<div class="t" style="left:-896.5px;width:1200px;text-align:right;top:25.88px;font:bold 19.4px/19.4px 'Liberation Sans', sans-serif;color:#2e75b6;">Other Revenue Services</div>
<div class="t" style="left:-900.4px;width:1200px;text-align:right;top:48.95px;font:italic 14px/14px 'Liberation Sans', sans-serif;color:#000;transform:scaleX(0.957);transform-origin:100% 50%;">All Values is in USD</div>
<div class="t" style="left:-899px;width:1200px;text-align:right;top:66.65px;font:14px/14px 'Liberation Sans', sans-serif;color:#000;transform:scaleX(0.928);transform-origin:100% 50%;">Month</div>
<div class="t" style="left:-899px;width:1200px;text-align:right;top:84.65px;font:14px/14px 'Liberation Sans', sans-serif;color:#000;transform:scaleX(0.928);transform-origin:100% 50%;">Start of Period</div>
<div class="t" style="left:-899px;width:1200px;text-align:right;top:102.65px;font:14px/14px 'Liberation Sans', sans-serif;color:#000;transform:scaleX(0.928);transform-origin:100% 50%;">End of Period</div>
<div class="t" style="left:-899px;width:1200px;text-align:right;top:120.65px;font:14px/14px 'Liberation Sans', sans-serif;color:#000;transform:scaleX(0.928);transform-origin:100% 50%;">Month</div>
<div class="t" style="left:-899px;width:1200px;text-align:right;top:138.65px;font:14px/14px 'Liberation Sans', sans-serif;color:#000;transform:scaleX(0.928);transform-origin:100% 50%;">Year</div>
<div class="t" style="left:-899px;width:1200px;text-align:right;top:156.65px;font:14px/14px 'Liberation Sans', sans-serif;color:#000;transform:scaleX(0.928);transform-origin:100% 50%;">No. of Days in a Month</div>
<div class="t" style="left:-899px;width:1200px;text-align:right;top:174.65px;font:14px/14px 'Liberation Sans', sans-serif;color:#000;transform:scaleX(0.928);transform-origin:100% 50%;">Inflation Rate</div>
<div class="t" style="left:54px;top:219.65px;font:bold 14px/14px 'Liberation Sans', sans-serif;color:#000;transform:scaleX(0.938);transform-origin:0 50%;">EPC (Engineering, Procurement, Construction) Projects</div>
<div class="t" style="left:54px;top:543.65px;font:bold 14px/14px 'Liberation Sans', sans-serif;color:#000;transform:scaleX(0.937);transform-origin:0 50%;">O&amp;M Contracts (Operations &amp; Maintenance)</div>
<div class="t" style="left:54px;top:723.65px;font:bold 14px/14px 'Liberation Sans', sans-serif;color:#000;transform:scaleX(0.935);transform-origin:0 50%;">EBAAS (Energy-as-a-Service / Subscription Model)</div>
<div class="t" style="left:-895px;width:1200px;text-align:right;top:237.65px;font:14px/14px 'Liberation Sans', sans-serif;color:#000;transform:scaleX(0.928);transform-origin:100% 50%;">No. of Projects</div>
<div class="t" style="left:-895px;width:1200px;text-align:right;top:255.65px;font:14px/14px 'Liberation Sans', sans-serif;color:#000;transform:scaleX(0.928);transform-origin:100% 50%;">Avg. Project Value</div>
<div class="t" style="left:-895px;width:1200px;text-align:right;top:291.65px;font:bold 14px/14px 'Liberation Sans', sans-serif;color:#000;transform:scaleX(0.94);transform-origin:100% 50%;">EPC - Revenue</div>
<div class="t" style="left:-895px;width:1200px;text-align:right;top:345.65px;font:bold 14px/14px 'Liberation Sans', sans-serif;color:#000;transform:scaleX(0.961);transform-origin:100% 50%;">Payment Collection Period</div>
<div class="t" style="left:-895px;width:1200px;text-align:right;top:363.65px;font:14px/14px 'Liberation Sans', sans-serif;color:#000;transform:scaleX(0.928);transform-origin:100% 50%;">1st Installments</div>
<div class="t" style="left:-895px;width:1200px;text-align:right;top:381.65px;font:14px/14px 'Liberation Sans', sans-serif;color:#000;transform:scaleX(0.928);transform-origin:100% 50%;">2nd Installments</div>
<div class="t" style="left:-895px;width:1200px;text-align:right;top:399.65px;font:14px/14px 'Liberation Sans', sans-serif;color:#000;transform:scaleX(0.928);transform-origin:100% 50%;">3rd Installments</div>
<div class="t" style="left:-895px;width:1200px;text-align:right;top:417.65px;font:bold 14px/14px 'Liberation Sans', sans-serif;color:#000;transform:scaleX(0.969);transform-origin:100% 50%;">Total Revenue Collected</div>
<div class="t" style="left:-895px;width:1200px;text-align:right;top:453.65px;font:bold 14px/14px 'Liberation Sans', sans-serif;color:#000;transform:scaleX(0.922);transform-origin:100% 50%;">COS - EPC</div>
<div class="t" style="left:-895px;width:1200px;text-align:right;top:489.65px;font:bold 14px/14px 'Liberation Sans', sans-serif;color:#000;transform:scaleX(0.897);transform-origin:100% 50%;">Gross Profit</div>
<div class="t" style="left:-895px;width:1200px;text-align:right;top:561.65px;font:14px/14px 'Liberation Sans', sans-serif;color:#000;transform:scaleX(0.928);transform-origin:100% 50%;">No. of Maintenance Contracts</div>
<div class="t" style="left:-895px;width:1200px;text-align:right;top:579.65px;font:14px/14px 'Liberation Sans', sans-serif;color:#000;transform:scaleX(0.928);transform-origin:100% 50%;">Avg. Contract Value</div>
<div class="t" style="left:-895px;width:1200px;text-align:right;top:597.65px;font:bold 14px/14px 'Liberation Sans', sans-serif;color:#000;transform:scaleX(0.934);transform-origin:100% 50%;">O&amp;M Contracts Revenue</div>
<div class="t" style="left:-895px;width:1200px;text-align:right;top:633.65px;font:14px/14px 'Liberation Sans', sans-serif;color:#000;transform:scaleX(0.928);transform-origin:100% 50%;">COS - O&amp;M</div>
<div class="t" style="left:-895px;width:1200px;text-align:right;top:669.65px;font:bold 14px/14px 'Liberation Sans', sans-serif;color:#000;transform:scaleX(0.897);transform-origin:100% 50%;">Gross Profit</div>
<div class="t" style="left:-895px;width:1200px;text-align:right;top:741.65px;font:14px/14px 'Liberation Sans', sans-serif;color:#000;transform:scaleX(0.944);transform-origin:100% 50%;">No. of EBAAS Customers</div>
<div class="t" style="left:-895px;width:1200px;text-align:right;top:759.65px;font:14px/14px 'Liberation Sans', sans-serif;color:#000;transform:scaleX(0.928);transform-origin:100% 50%;">Avg, KWh Installed</div>
<div class="t" style="left:-895px;width:1200px;text-align:right;top:777.65px;font:bold 14px/14px 'Liberation Sans', sans-serif;color:#000;transform:scaleX(0.962);transform-origin:100% 50%;">Total KWh Installed</div>
<div class="t" style="left:-895px;width:1200px;text-align:right;top:831.65px;font:14px/14px 'Liberation Sans', sans-serif;color:#000;transform:scaleX(0.928);transform-origin:100% 50%;">Avg. Price Per KWh</div>
<div class="t" style="left:-897.5px;width:1200px;text-align:right;top:507.65px;font:italic 14px/14px 'Liberation Sans', sans-serif;color:#808080;transform:scaleX(0.928);transform-origin:100% 50%;">Gross Profit Margin</div>
<div class="t" style="left:-897.5px;width:1200px;text-align:right;top:687.65px;font:italic 14px/14px 'Liberation Sans', sans-serif;color:#808080;transform:scaleX(0.928);transform-origin:100% 50%;">Gross Profit Margin</div>
<div class="t" style="left:308px;top:349.04px;font:italic 10px/10px 'Liberation Sans', sans-serif;color:#333;letter-spacing:0.2px;transform:scaleX(0.95);transform-origin:0 50%;">Months</div>
<div class="t" style="left:-855px;width:1200px;text-align:right;top:366.19px;font:italic 11px/11px 'Liberation Sans', sans-serif;color:#333;">2</div>
<div class="t" style="left:-855px;width:1200px;text-align:right;top:384.19px;font:italic 11px/11px 'Liberation Sans', sans-serif;color:#333;">4</div>
<div class="t" style="left:-855px;width:1200px;text-align:right;top:402.19px;font:italic 11px/11px 'Liberation Sans', sans-serif;color:#333;">6</div>
<div style="position:absolute;left:0px;top:0px;width:1900px;height:23px;background:#fff;"></div>
<svg style="position:absolute;left:0;top:0" width="17" height="23"><polygon points="3,20 14,20 14,9" fill="#dcdcdc"/></svg>
<div style="position:absolute;left:51px;top:4px;width:1px;height:19px;background:#dedede;"></div>
<div class="t" style="left:-566.0px;width:1200px;text-align:center;top:7.50px;font:13px/13px 'Liberation Sans', sans-serif;color:#444;">A</div>
<div style="position:absolute;left:307px;top:4px;width:1px;height:19px;background:#dedede;"></div>
<div class="t" style="left:-421.0px;width:1200px;text-align:center;top:7.50px;font:13px/13px 'Liberation Sans', sans-serif;color:#444;">B</div>
<div style="position:absolute;left:346px;top:4px;width:1px;height:19px;background:#dedede;"></div>
<div class="t" style="left:-273.5px;width:1200px;text-align:center;top:7.50px;font:13px/13px 'Liberation Sans', sans-serif;color:#444;">C</div>
<div class="t" style="left:-249.0px;width:1200px;text-align:center;top:7.50px;font:13px/13px 'Liberation Sans', sans-serif;color:#444;">D</div>
<div style="position:absolute;left:439px;top:4px;width:1px;height:19px;background:#dedede;"></div>
<div class="t" style="left:-202.5px;width:1200px;text-align:center;top:7.50px;font:13px/13px 'Liberation Sans', sans-serif;color:#444;">E</div>
<div style="position:absolute;left:529px;top:4px;width:1px;height:19px;background:#dedede;"></div>
<div class="t" style="left:-116.0px;width:1200px;text-align:center;top:7.50px;font:13px/13px 'Liberation Sans', sans-serif;color:#444;">F</div>
<div style="position:absolute;left:631px;top:4px;width:1px;height:19px;background:#dedede;"></div>
<div class="t" style="left:-20.0px;width:1200px;text-align:center;top:7.50px;font:13px/13px 'Liberation Sans', sans-serif;color:#444;">G</div>
<div style="position:absolute;left:733px;top:4px;width:1px;height:19px;background:#dedede;"></div>
<div class="t" style="left:82.0px;width:1200px;text-align:center;top:7.50px;font:13px/13px 'Liberation Sans', sans-serif;color:#444;">H</div>
<div style="position:absolute;left:869px;top:4px;width:1px;height:19px;background:#dedede;"></div>
<div class="t" style="left:201.0px;width:1200px;text-align:center;top:7.50px;font:13px/13px 'Liberation Sans', sans-serif;color:#444;">I</div>
<div style="position:absolute;left:971px;top:4px;width:1px;height:19px;background:#dedede;"></div>
<div class="t" style="left:320.0px;width:1200px;text-align:center;top:7.50px;font:13px/13px 'Liberation Sans', sans-serif;color:#444;">J</div>
<div style="position:absolute;left:1080px;top:4px;width:1px;height:19px;background:#dedede;"></div>
<div class="t" style="left:425.5px;width:1200px;text-align:center;top:7.50px;font:13px/13px 'Liberation Sans', sans-serif;color:#444;">K</div>
<div style="position:absolute;left:1189px;top:4px;width:1px;height:19px;background:#dedede;"></div>
<div class="t" style="left:534.5px;width:1200px;text-align:center;top:7.50px;font:13px/13px 'Liberation Sans', sans-serif;color:#444;">L</div>
<div style="position:absolute;left:1291px;top:4px;width:1px;height:19px;background:#dedede;"></div>
<div class="t" style="left:640.0px;width:1200px;text-align:center;top:7.50px;font:13px/13px 'Liberation Sans', sans-serif;color:#444;">M</div>
<div style="position:absolute;left:1393px;top:4px;width:1px;height:19px;background:#dedede;"></div>
<div class="t" style="left:742.0px;width:1200px;text-align:center;top:7.50px;font:13px/13px 'Liberation Sans', sans-serif;color:#444;">N</div>
<div style="position:absolute;left:1495px;top:4px;width:1px;height:19px;background:#dedede;"></div>
<div class="t" style="left:844.0px;width:1200px;text-align:center;top:7.50px;font:13px/13px 'Liberation Sans', sans-serif;color:#444;">O</div>
<div style="position:absolute;left:1597px;top:4px;width:1px;height:19px;background:#dedede;"></div>
<div class="t" style="left:946.0px;width:1200px;text-align:center;top:7.50px;font:13px/13px 'Liberation Sans', sans-serif;color:#444;">P</div>
<div style="position:absolute;left:1699px;top:4px;width:1px;height:19px;background:#dedede;"></div>
<div class="t" style="left:1048.0px;width:1200px;text-align:center;top:7.50px;font:13px/13px 'Liberation Sans', sans-serif;color:#444;">Q</div>
<div style="position:absolute;left:1801px;top:4px;width:1px;height:19px;background:#dedede;"></div>
<div class="t" style="left:1150.0px;width:1200px;text-align:center;top:7.50px;font:13px/13px 'Liberation Sans', sans-serif;color:#444;">R</div>
<div class="t" style="left:1252.0px;width:1200px;text-align:center;top:7.50px;font:13px/13px 'Liberation Sans', sans-serif;color:#444;">S</div>
<div style="position:absolute;left:17px;top:4px;width:1px;height:19px;background:#d8d8d8;"></div>
<div style="position:absolute;left:0px;top:23px;width:17px;height:1px;background:#d8d8d8;"></div>
<div style="position:absolute;left:17px;top:23px;width:1869px;height:1px;background:#ababab;"></div>
<div style="position:absolute;left:0px;top:24px;width:17px;height:829px;background:#fff;"></div>
<div style="position:absolute;left:0px;top:47px;width:17px;height:17px;background:#e1e1e1;"></div>
<div style="position:absolute;left:0px;top:46px;width:17px;height:1px;background:#dcdcdc;"></div>
<div style="position:absolute;left:0px;top:64px;width:17px;height:1px;background:#dcdcdc;"></div>
<div style="position:absolute;left:0px;top:82px;width:17px;height:1px;background:#dcdcdc;"></div>
<div style="position:absolute;left:0px;top:100px;width:17px;height:1px;background:#dcdcdc;"></div>
<div style="position:absolute;left:0px;top:118px;width:17px;height:1px;background:#dcdcdc;"></div>
<div style="position:absolute;left:0px;top:136px;width:17px;height:1px;background:#dcdcdc;"></div>
<div style="position:absolute;left:0px;top:154px;width:17px;height:1px;background:#dcdcdc;"></div>
<div style="position:absolute;left:0px;top:172px;width:17px;height:1px;background:#dcdcdc;"></div>
<div style="position:absolute;left:0px;top:190px;width:17px;height:1px;background:#dcdcdc;"></div>
<div style="position:absolute;left:0px;top:199px;width:17px;height:1px;background:#dcdcdc;"></div>
<div style="position:absolute;left:0px;top:217px;width:17px;height:1px;background:#dcdcdc;"></div>
<div style="position:absolute;left:0px;top:235px;width:17px;height:1px;background:#dcdcdc;"></div>
<div style="position:absolute;left:0px;top:253px;width:17px;height:1px;background:#dcdcdc;"></div>
<div style="position:absolute;left:0px;top:271px;width:17px;height:1px;background:#dcdcdc;"></div>
<div style="position:absolute;left:0px;top:289px;width:17px;height:1px;background:#dcdcdc;"></div>
<div style="position:absolute;left:0px;top:307px;width:17px;height:1px;background:#dcdcdc;"></div>
<div style="position:absolute;left:0px;top:325px;width:17px;height:1px;background:#dcdcdc;"></div>
<div style="position:absolute;left:0px;top:343px;width:17px;height:1px;background:#dcdcdc;"></div>
<div style="position:absolute;left:0px;top:361px;width:17px;height:1px;background:#dcdcdc;"></div>
<div style="position:absolute;left:0px;top:379px;width:17px;height:1px;background:#dcdcdc;"></div>
<div style="position:absolute;left:0px;top:397px;width:17px;height:1px;background:#dcdcdc;"></div>
<div style="position:absolute;left:0px;top:415px;width:17px;height:1px;background:#dcdcdc;"></div>
<div style="position:absolute;left:0px;top:433px;width:17px;height:1px;background:#dcdcdc;"></div>
<div style="position:absolute;left:0px;top:451px;width:17px;height:1px;background:#dcdcdc;"></div>
<div style="position:absolute;left:0px;top:469px;width:17px;height:1px;background:#dcdcdc;"></div>
<div style="position:absolute;left:0px;top:487px;width:17px;height:1px;background:#dcdcdc;"></div>
<div style="position:absolute;left:0px;top:505px;width:17px;height:1px;background:#dcdcdc;"></div>
<div style="position:absolute;left:0px;top:523px;width:17px;height:1px;background:#dcdcdc;"></div>
<div style="position:absolute;left:0px;top:541px;width:17px;height:1px;background:#dcdcdc;"></div>
<div style="position:absolute;left:0px;top:559px;width:17px;height:1px;background:#dcdcdc;"></div>
<div style="position:absolute;left:0px;top:577px;width:17px;height:1px;background:#dcdcdc;"></div>
<div style="position:absolute;left:0px;top:595px;width:17px;height:1px;background:#dcdcdc;"></div>
<div style="position:absolute;left:0px;top:613px;width:17px;height:1px;background:#dcdcdc;"></div>
<div style="position:absolute;left:0px;top:631px;width:17px;height:1px;background:#dcdcdc;"></div>
<div style="position:absolute;left:0px;top:649px;width:17px;height:1px;background:#dcdcdc;"></div>
<div style="position:absolute;left:0px;top:667px;width:17px;height:1px;background:#dcdcdc;"></div>
<div style="position:absolute;left:0px;top:685px;width:17px;height:1px;background:#dcdcdc;"></div>
<div style="position:absolute;left:0px;top:703px;width:17px;height:1px;background:#dcdcdc;"></div>
<div style="position:absolute;left:0px;top:721px;width:17px;height:1px;background:#dcdcdc;"></div>
<div style="position:absolute;left:0px;top:739px;width:17px;height:1px;background:#dcdcdc;"></div>
<div style="position:absolute;left:0px;top:757px;width:17px;height:1px;background:#dcdcdc;"></div>
<div style="position:absolute;left:0px;top:775px;width:17px;height:1px;background:#dcdcdc;"></div>
<div style="position:absolute;left:0px;top:793px;width:17px;height:1px;background:#dcdcdc;"></div>
<div style="position:absolute;left:0px;top:811px;width:17px;height:1px;background:#dcdcdc;"></div>
<div style="position:absolute;left:0px;top:829px;width:17px;height:1px;background:#dcdcdc;"></div>
<div style="position:absolute;left:0px;top:847px;width:17px;height:1px;background:#dcdcdc;"></div>
<div class="t" style="left:-595.3px;width:1200px;text-align:center;top:32.34px;font:12px/12px 'Liberation Sans', sans-serif;color:#444;">1</div>
<div class="t" style="left:-595.3px;width:1200px;text-align:center;top:51.34px;font:12px/12px 'Liberation Sans', sans-serif;color:#217346;">2</div>
<div class="t" style="left:-595.3px;width:1200px;text-align:center;top:69.34px;font:12px/12px 'Liberation Sans', sans-serif;color:#444;">3</div>
<div class="t" style="left:-595.3px;width:1200px;text-align:center;top:87.34px;font:12px/12px 'Liberation Sans', sans-serif;color:#444;">4</div>
<div class="t" style="left:-595.3px;width:1200px;text-align:center;top:105.34px;font:12px/12px 'Liberation Sans', sans-serif;color:#444;">5</div>
<div class="t" style="left:-595.3px;width:1200px;text-align:center;top:123.34px;font:12px/12px 'Liberation Sans', sans-serif;color:#444;">6</div>
<div class="t" style="left:-595.3px;width:1200px;text-align:center;top:141.34px;font:12px/12px 'Liberation Sans', sans-serif;color:#444;">7</div>
<div class="t" style="left:-595.3px;width:1200px;text-align:center;top:159.34px;font:12px/12px 'Liberation Sans', sans-serif;color:#444;">8</div>
<div class="t" style="left:-595.3px;width:1200px;text-align:center;top:177.34px;font:12px/12px 'Liberation Sans', sans-serif;color:#444;">9</div>
<div style="position:absolute;left:0;top:191px;width:17px;height:8px;overflow:hidden;">
<div class="t" style="left:-595.3px;width:1200px;text-align:center;top:-4.16px;font:12px/12px 'Liberation Sans', sans-serif;color:#444;">10</div>
</div>
<div class="t" style="left:-595.3px;width:1200px;text-align:center;top:204.34px;font:12px/12px 'Liberation Sans', sans-serif;color:#444;">11</div>
<div class="t" style="left:-595.3px;width:1200px;text-align:center;top:222.34px;font:12px/12px 'Liberation Sans', sans-serif;color:#444;">12</div>
<div class="t" style="left:-595.3px;width:1200px;text-align:center;top:240.34px;font:12px/12px 'Liberation Sans', sans-serif;color:#444;">13</div>
<div class="t" style="left:-595.3px;width:1200px;text-align:center;top:258.34px;font:12px/12px 'Liberation Sans', sans-serif;color:#444;">14</div>
<div class="t" style="left:-595.3px;width:1200px;text-align:center;top:276.34px;font:12px/12px 'Liberation Sans', sans-serif;color:#444;">15</div>
<div class="t" style="left:-595.3px;width:1200px;text-align:center;top:294.34px;font:12px/12px 'Liberation Sans', sans-serif;color:#444;">16</div>
<div class="t" style="left:-595.3px;width:1200px;text-align:center;top:312.34px;font:12px/12px 'Liberation Sans', sans-serif;color:#444;">17</div>
<div class="t" style="left:-595.3px;width:1200px;text-align:center;top:330.34px;font:12px/12px 'Liberation Sans', sans-serif;color:#444;">18</div>
<div class="t" style="left:-595.3px;width:1200px;text-align:center;top:348.34px;font:12px/12px 'Liberation Sans', sans-serif;color:#444;">19</div>
<div class="t" style="left:-595.3px;width:1200px;text-align:center;top:366.34px;font:12px/12px 'Liberation Sans', sans-serif;color:#444;">20</div>
<div class="t" style="left:-595.3px;width:1200px;text-align:center;top:384.34px;font:12px/12px 'Liberation Sans', sans-serif;color:#444;">21</div>
<div class="t" style="left:-595.3px;width:1200px;text-align:center;top:402.34px;font:12px/12px 'Liberation Sans', sans-serif;color:#444;">22</div>
<div class="t" style="left:-595.3px;width:1200px;text-align:center;top:420.34px;font:12px/12px 'Liberation Sans', sans-serif;color:#444;">23</div>
<div class="t" style="left:-595.3px;width:1200px;text-align:center;top:438.34px;font:12px/12px 'Liberation Sans', sans-serif;color:#444;">24</div>
<div class="t" style="left:-595.3px;width:1200px;text-align:center;top:456.34px;font:12px/12px 'Liberation Sans', sans-serif;color:#444;">25</div>
<div class="t" style="left:-595.3px;width:1200px;text-align:center;top:474.34px;font:12px/12px 'Liberation Sans', sans-serif;color:#444;">26</div>
<div class="t" style="left:-595.3px;width:1200px;text-align:center;top:492.34px;font:12px/12px 'Liberation Sans', sans-serif;color:#444;">27</div>
<div class="t" style="left:-595.3px;width:1200px;text-align:center;top:510.34px;font:12px/12px 'Liberation Sans', sans-serif;color:#444;">28</div>
<div class="t" style="left:-595.3px;width:1200px;text-align:center;top:528.34px;font:12px/12px 'Liberation Sans', sans-serif;color:#444;">29</div>
<div class="t" style="left:-595.3px;width:1200px;text-align:center;top:546.34px;font:12px/12px 'Liberation Sans', sans-serif;color:#444;">30</div>
<div class="t" style="left:-595.3px;width:1200px;text-align:center;top:564.34px;font:12px/12px 'Liberation Sans', sans-serif;color:#444;">31</div>
<div class="t" style="left:-595.3px;width:1200px;text-align:center;top:582.34px;font:12px/12px 'Liberation Sans', sans-serif;color:#444;">32</div>
<div class="t" style="left:-595.3px;width:1200px;text-align:center;top:600.34px;font:12px/12px 'Liberation Sans', sans-serif;color:#444;">33</div>
<div class="t" style="left:-595.3px;width:1200px;text-align:center;top:618.34px;font:12px/12px 'Liberation Sans', sans-serif;color:#444;">34</div>
<div class="t" style="left:-595.3px;width:1200px;text-align:center;top:636.34px;font:12px/12px 'Liberation Sans', sans-serif;color:#444;">35</div>
<div class="t" style="left:-595.3px;width:1200px;text-align:center;top:654.34px;font:12px/12px 'Liberation Sans', sans-serif;color:#444;">36</div>
<div class="t" style="left:-595.3px;width:1200px;text-align:center;top:672.34px;font:12px/12px 'Liberation Sans', sans-serif;color:#444;">37</div>
<div class="t" style="left:-595.3px;width:1200px;text-align:center;top:690.34px;font:12px/12px 'Liberation Sans', sans-serif;color:#444;">38</div>
<div class="t" style="left:-595.3px;width:1200px;text-align:center;top:708.34px;font:12px/12px 'Liberation Sans', sans-serif;color:#444;">39</div>
<div class="t" style="left:-595.3px;width:1200px;text-align:center;top:726.34px;font:12px/12px 'Liberation Sans', sans-serif;color:#444;">40</div>
<div class="t" style="left:-595.3px;width:1200px;text-align:center;top:744.34px;font:12px/12px 'Liberation Sans', sans-serif;color:#444;">41</div>
<div class="t" style="left:-595.3px;width:1200px;text-align:center;top:762.34px;font:12px/12px 'Liberation Sans', sans-serif;color:#444;">42</div>
<div class="t" style="left:-595.3px;width:1200px;text-align:center;top:780.34px;font:12px/12px 'Liberation Sans', sans-serif;color:#444;">43</div>
<div class="t" style="left:-595.3px;width:1200px;text-align:center;top:798.34px;font:12px/12px 'Liberation Sans', sans-serif;color:#444;">44</div>
<div class="t" style="left:-595.3px;width:1200px;text-align:center;top:816.34px;font:12px/12px 'Liberation Sans', sans-serif;color:#444;">45</div>
<div class="t" style="left:-595.3px;width:1200px;text-align:center;top:834.34px;font:12px/12px 'Liberation Sans', sans-serif;color:#444;">46</div>
<div style="position:absolute;left:0px;top:0px;width:17px;height:23px;background:#fff;"></div>
<svg style="position:absolute;left:0;top:0" width="17" height="23"><polygon points="3,20 14,20 14,9" fill="#dcdcdc"/></svg>
<div style="position:absolute;left:0px;top:23px;width:17px;height:1px;background:#d8d8d8;"></div>
<div style="position:absolute;left:17px;top:24px;width:1px;height:829px;background:#b0b0b0;"></div>
<div style="position:absolute;left:16px;top:47px;width:2px;height:18px;background:#217346;"></div>
<div style="position:absolute;left:356px;top:4px;width:1px;height:849px;background:#9e9e9e;"></div>
<div style="position:absolute;left:0px;top:199px;width:1885px;height:1px;background:#9e9e9e;"></div>
<div style="position:absolute;left:1885px;top:23px;width:1px;height:831px;background:#a8a8a8;"></div>
<div style="position:absolute;left:0px;top:853px;width:1886px;height:1px;background:#a8a8a8;"></div>
<div style="position:absolute;left:1886px;top:0px;width:14px;height:854px;background:#fff;"></div>
<div style="position:absolute;left:1885px;top:23px;width:1px;height:831px;background:#a8a8a8;"></div>
<div style="position:absolute;left:1889px;top:6px;width:12px;height:19px;background:#fff;box-sizing:border-box;border:1px solid #c8c8c8;"></div>
<svg style="position:absolute;left:1889px;top:6px" width="11" height="19"><polygon points="3,12 11,12 8,7" fill="#6d6d6d"/></svg>
<div style="position:absolute;left:1889px;top:24px;width:11px;height:2px;background:#a0a0a0;"></div>
<div style="position:absolute;left:1889px;top:26px;width:12px;height:272px;background:#fff;box-sizing:border-box;border:1px solid #a8a8a8;border-top:0;"></div>
<div style="position:absolute;left:1889px;top:298px;width:11px;height:536px;background:#e9e9e9;"></div>
<div style="position:absolute;left:1889px;top:834px;width:12px;height:19px;background:#fff;box-sizing:border-box;border:1px solid #c8c8c8;"></div>
<svg style="position:absolute;left:1889px;top:834px" width="11" height="19"><polygon points="3,7 11,7 8,12" fill="#6d6d6d"/></svg>
<div style="position:absolute;left:0px;top:854px;width:1900px;height:21px;background:#f4f4f4;"></div>
<svg style="position:absolute;left:0;top:854px" width="100" height="21"><polygon points="19,13.5 25,8.5 25,18" fill="#126632"/><polygon points="47.8,8.5 53.3,13.5 47.8,18" fill="#126632"/><rect x="73" y="13.4" width="2.2" height="2.2" fill="#126632"/><rect x="78.5" y="13.4" width="2.2" height="2.2" fill="#126632"/><rect x="84" y="13.4" width="2.2" height="2.2" fill="#126632"/></svg>
<div style="position:absolute;left:94px;top:857px;width:1px;height:18px;background:#c0c0c0;"></div>
<div style="position:absolute;left:97px;top:856px;width:214px;height:19px;background:#fce4d6;overflow:hidden;"></div>
<div style="position:absolute;left:316px;top:856px;width:217px;height:19px;background:#c6e0b4;overflow:hidden;"></div>
<div style="position:absolute;left:537px;top:856px;width:218px;height:19px;background:#c6e0b4;overflow:hidden;"></div>
<div style="position:absolute;left:760px;top:856px;width:229px;height:19px;background:#c6e0b4;overflow:hidden;"></div>
<div style="position:absolute;left:1202px;top:856px;width:89px;height:19px;background:#c6e0b4;overflow:hidden;"></div>
<div style="position:absolute;left:313px;top:857px;width:1px;height:18px;background:#c8c8c8;"></div>
<div style="position:absolute;left:534px;top:857px;width:1px;height:18px;background:#c8c8c8;"></div>
<div style="position:absolute;left:757px;top:857px;width:1px;height:18px;background:#c8c8c8;"></div>
<div style="position:absolute;left:991px;top:853px;width:209px;height:22px;background:linear-gradient(#ffffff 0%, #ffffff 55%, #e6f2e0 100%);box-sizing:border-box;border-left:1px solid #b0b0b0;border-right:1px solid #b0b0b0;"></div>
<div style="position:absolute;left:97px;top:854px;width:214px;height:21px;overflow:hidden;">
<div class="t" style="left:15px;top:2.56px;font:16.7px/16.7px 'Liberation Sans', sans-serif;color:#000;">Balance Sheet (Monthly)</div>
</div>
<div style="position:absolute;left:316px;top:854px;width:217px;height:21px;overflow:hidden;">
<div class="t" style="left:14.5px;top:2.56px;font:16.7px/16.7px 'Liberation Sans', sans-serif;color:#000;">Solar Revenue (Monthly)</div>
</div>
<div style="position:absolute;left:537px;top:854px;width:218px;height:21px;overflow:hidden;">
<div class="t" style="left:14px;top:2.31px;font:17.0px/17.0px 'Liberation Sans', sans-serif;color:#000;">Wind Revenue (Monthly)</div>
</div>
<div style="position:absolute;left:760px;top:854px;width:229px;height:21px;overflow:hidden;">
<div class="t" style="left:16px;top:2.44px;font:16.85px/16.85px 'Liberation Sans', sans-serif;color:#000;">Bio-Fuel Energy (Monthly)</div>
</div>
<div style="position:absolute;left:1202px;top:854px;width:89px;height:21px;overflow:hidden;">
<div class="t" style="left:12.5px;top:2.31px;font:17.0px/17.0px 'Liberation Sans', sans-serif;color:#000;">Operation</div>
</div>
<div class="t" style="left:1003.5px;top:857.07px;font:bold 16.1px/16.1px 'Liberation Sans', sans-serif;color:#217346;">Other Revenue Sources</div>
<svg style="position:absolute;left:1290px;top:854px" width="90" height="21"><rect x="9.2" y="13.6" width="2.2" height="2.2" fill="#126632"/><rect x="14.2" y="13.6" width="2.2" height="2.2" fill="#126632"/><rect x="19.2" y="13.6" width="2.2" height="2.2" fill="#126632"/><circle cx="44" cy="14" r="9.3" fill="none" stroke="#707070" stroke-width="1.3"/><path d="M39 14H49M44 9V19" stroke="#666" stroke-width="1.8"/><rect x="72" y="8.6" width="2" height="2" fill="#b0b0b0"/><rect x="72" y="13.1" width="2" height="2" fill="#b0b0b0"/><rect x="72" y="17.6" width="2" height="2" fill="#b0b0b0"/></svg>
<div style="position:absolute;left:1380px;top:858px;width:19px;height:18px;background:#fff;box-sizing:border-box;border:1px solid #c8c8c8;"></div>
<svg style="position:absolute;left:1380px;top:858px" width="19" height="17"><polygon points="6,10 11,5 11,15" fill="#6d6d6d"/></svg>
<div style="position:absolute;left:1398px;top:858px;width:55px;height:18px;background:#fff;box-sizing:border-box;border:1px solid #a8a8a8;border-left-width:2px;"></div>
<div style="position:absolute;left:1453px;top:858px;width:412px;height:17px;background:#e9e9e9;"></div>
<div style="position:absolute;left:1865px;top:858px;width:19px;height:18px;background:#fff;box-sizing:border-box;border:1px solid #c8c8c8;"></div>
<svg style="position:absolute;left:1865px;top:858px" width="19" height="17"><polygon points="7,5 12,10 7,15" fill="#6d6d6d"/></svg>
</body></html>
